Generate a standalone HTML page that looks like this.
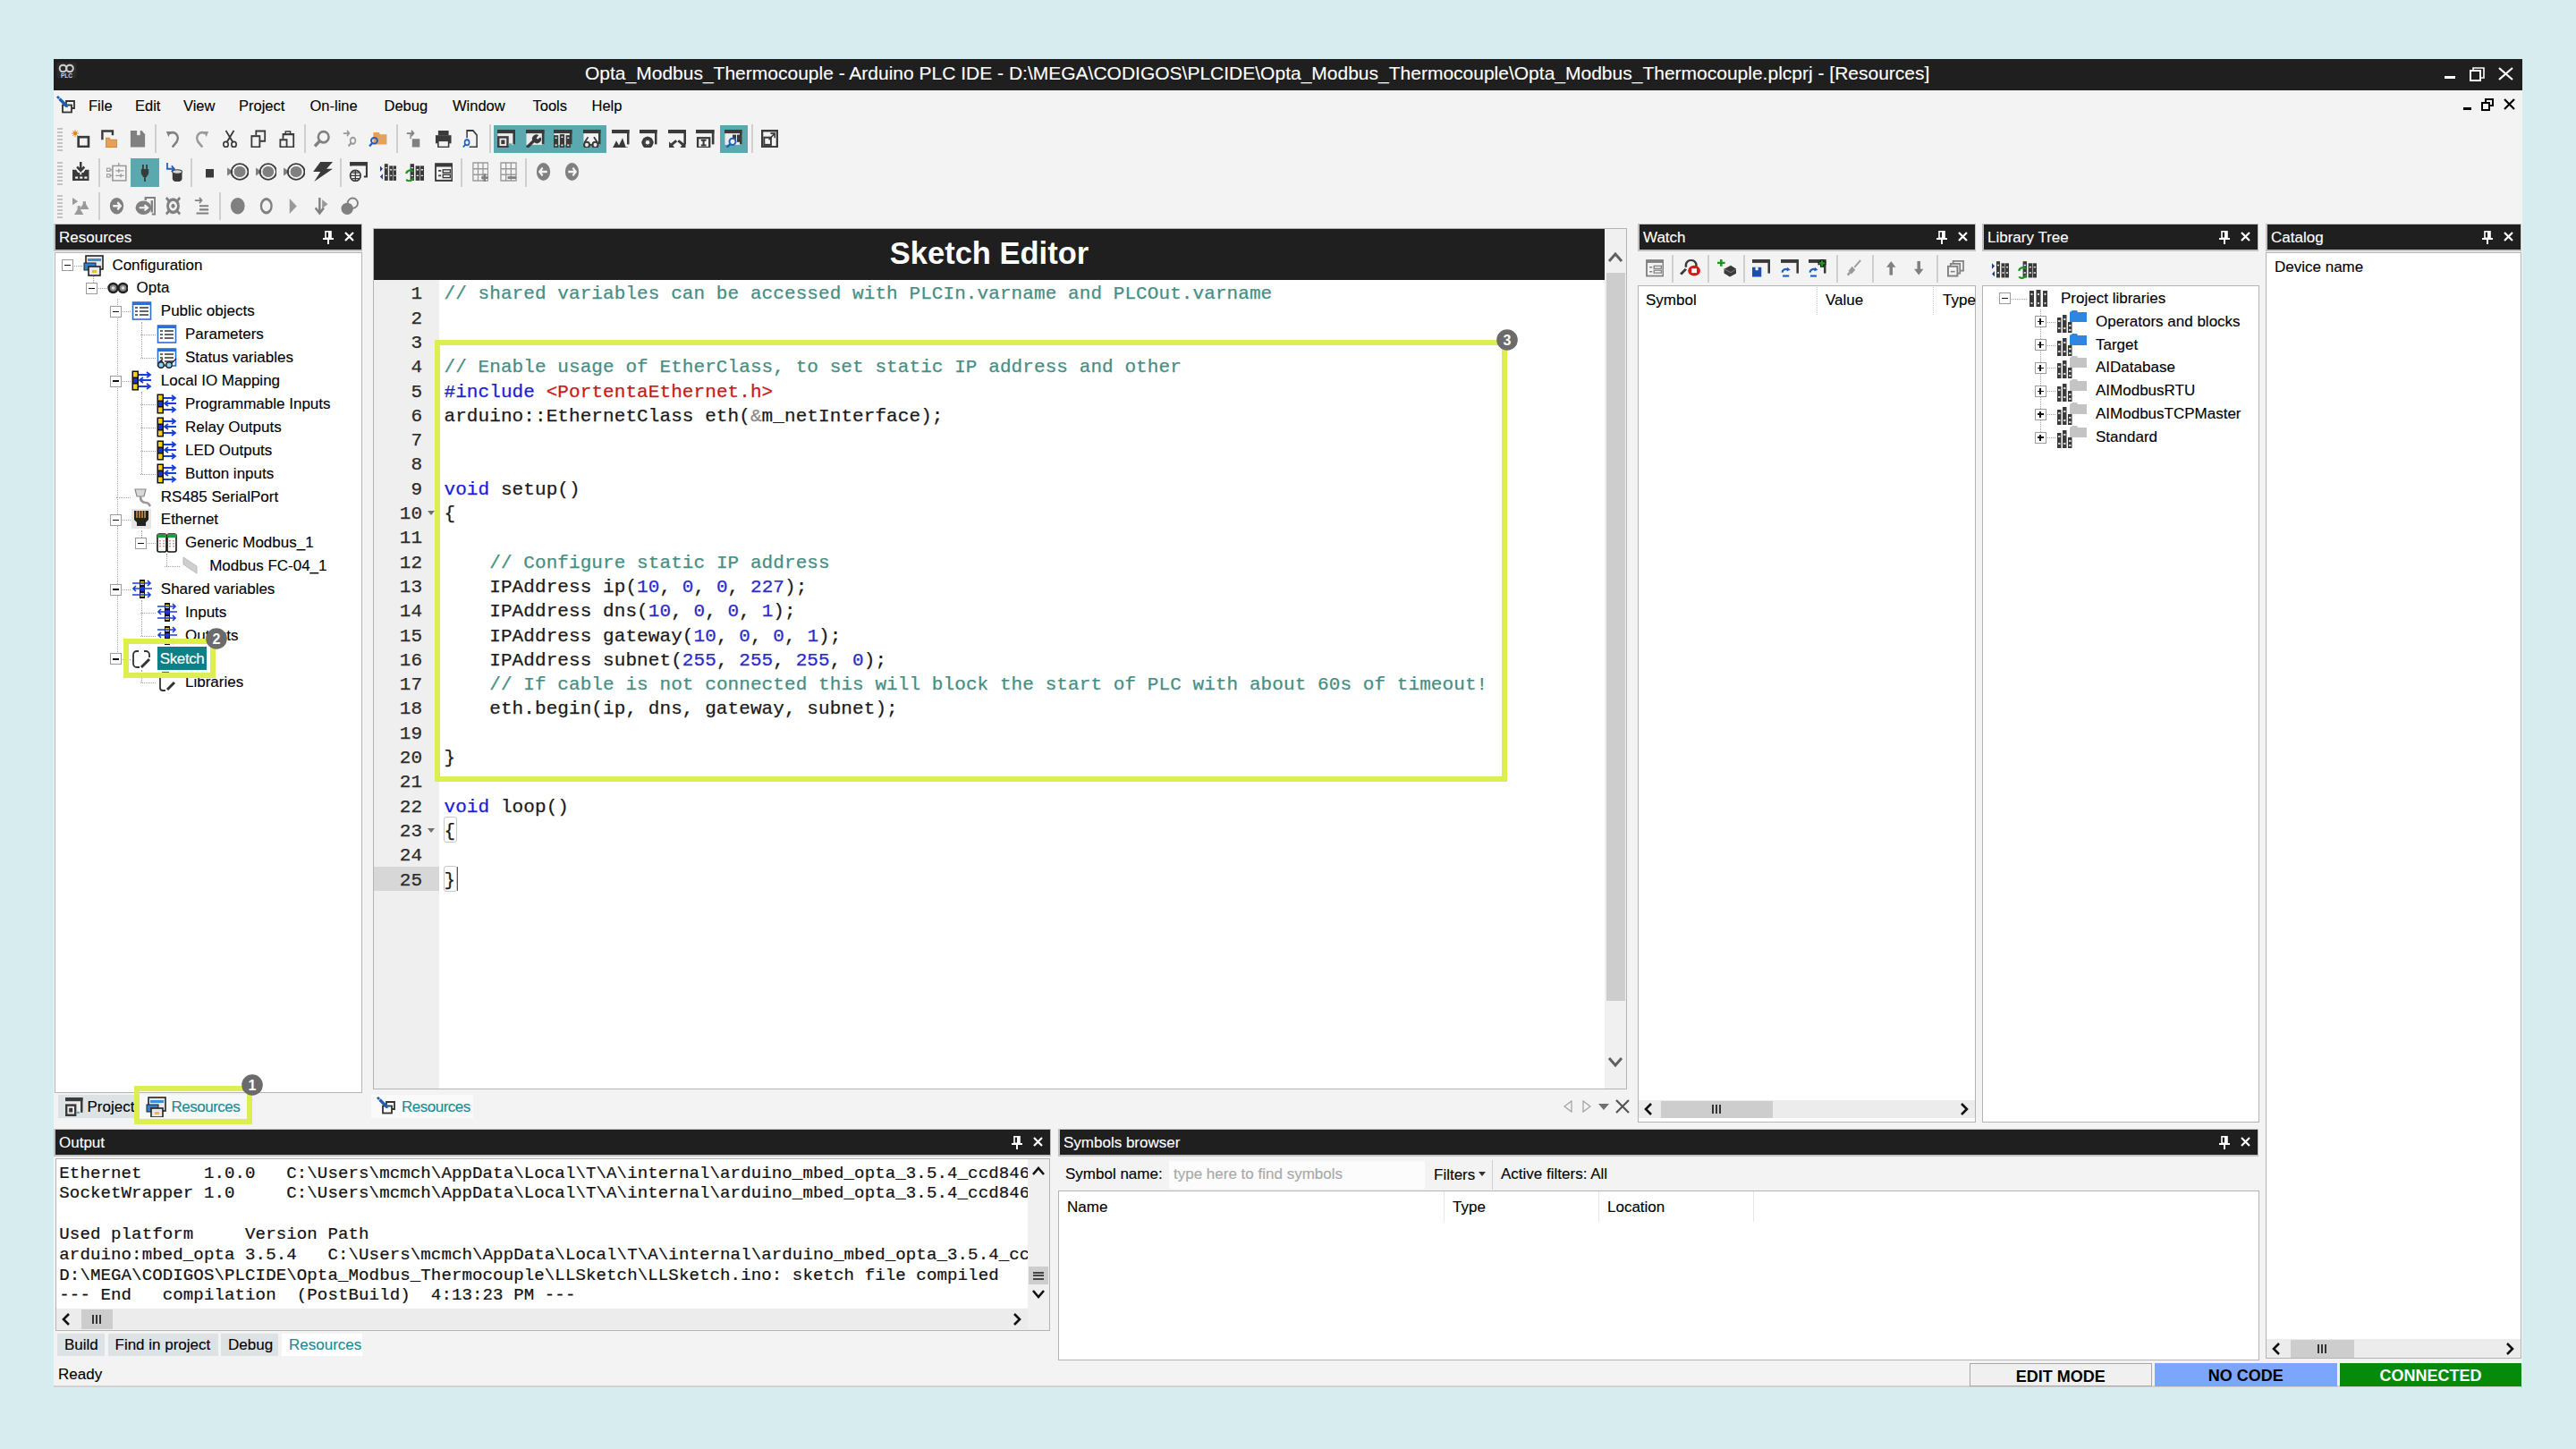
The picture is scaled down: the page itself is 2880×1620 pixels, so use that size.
<!DOCTYPE html><html><head><meta charset="utf-8"><style>
html,body{margin:0;padding:0;}
body{width:2880px;height:1620px;overflow:hidden;background:#d6ecef;position:relative;font-family:"Liberation Sans",sans-serif;}
body div, body svg{position:absolute;box-sizing:border-box;}
.t{-webkit-text-stroke:0.12px currentColor;}
</style></head><body>
<div style="left:60px;top:66px;width:2760px;height:1485px;background:#f3f3f3;"></div>
<div style="left:60px;top:66px;width:2760px;height:35px;background:#1f1f1f;"></div>
<div style="left:60px;top:1549px;width:2760px;height:2px;background:#d0d0d0;"></div>
<svg style="left:63px;top:69px;" width="23" height="19" viewBox="0 0 23 19"><rect x="0.5" y="0.5" width="22" height="18" rx="3" fill="#2b2b2b"/><circle cx="7.5" cy="7.5" r="3.8" fill="none" stroke="#d0d0d0" stroke-width="2"/><circle cx="15" cy="7.5" r="3.8" fill="none" stroke="#d0d0d0" stroke-width="2"/><text x="11.5" y="18" font-size="6.5" font-family="Liberation Sans" font-weight="bold" fill="#d0d0d0" text-anchor="middle">PLC</text></svg>
<div class="t" style="left:654px;top:69.5px;height:25px;line-height:25px;font:normal 21px 'Liberation Sans', sans-serif;color:#ffffff;white-space:pre;">Opta_Modbus_Thermocouple - Arduino PLC IDE - D:\MEGA\CODIGOS\PLCIDE\Opta_Modbus_Thermocouple\Opta_Modbus_Thermocouple.plcprj - [Resources]</div>
<div style="left:2733px;top:85px;width:12px;height:3px;background:#fff;"></div>
<svg style="left:2761px;top:75px;" width="17" height="16" viewBox="0 0 17 16"><rect x="1" y="4" width="11" height="11" fill="none" stroke="#fff" stroke-width="2"/><path d="M4 4V1h12v11h-4" fill="none" stroke="#fff" stroke-width="1.6"/></svg>
<svg style="left:2793px;top:75px;" width="17" height="15" viewBox="0 0 17 15"><path d="M1 1L16 14M16 1L1 14" stroke="#fff" stroke-width="2.2"/></svg>
<div style="left:2754px;top:120px;width:9px;height:3px;background:#000;"></div>
<svg style="left:2774px;top:110px;" width="14" height="14" viewBox="0 0 14 14"><rect x="1" y="5" width="8" height="8" fill="none" stroke="#000" stroke-width="2"/><path d="M5 5V1h8v7h-4" fill="none" stroke="#000" stroke-width="2"/></svg>
<svg style="left:2799px;top:110px;" width="13" height="13" viewBox="0 0 13 13"><path d="M1 1L12 12M12 1L1 12" stroke="#000" stroke-width="2.2"/></svg>
<svg style="left:63px;top:107px;" width="22" height="22" viewBox="0 0 22 22"><rect x="7" y="10.5" width="10" height="8" fill="none" stroke="#333" stroke-width="1.8"/><path d="M11 10V6h9v8h-3" fill="none" stroke="#333" stroke-width="1.8"/><path d="M3.5 3.5L12 12" stroke="#1a5fb4" stroke-width="3.2"/><path d="M0 1.5l2-1.5 2 2-2 2z" fill="#1a5fb4"/><path d="M11.5 11.5l2 1.5-2.5 0z" fill="#1a5fb4"/></svg>
<div class="t" style="left:99px;top:109.0px;height:20px;line-height:20px;font:normal 16.5px 'Liberation Sans', sans-serif;color:#000;white-space:pre;">File</div>
<div class="t" style="left:151px;top:109.0px;height:20px;line-height:20px;font:normal 16.5px 'Liberation Sans', sans-serif;color:#000;white-space:pre;">Edit</div>
<div class="t" style="left:205px;top:109.0px;height:20px;line-height:20px;font:normal 16.5px 'Liberation Sans', sans-serif;color:#000;white-space:pre;">View</div>
<div class="t" style="left:267px;top:109.0px;height:20px;line-height:20px;font:normal 16.5px 'Liberation Sans', sans-serif;color:#000;white-space:pre;">Project</div>
<div class="t" style="left:346.5px;top:109.0px;height:20px;line-height:20px;font:normal 16.5px 'Liberation Sans', sans-serif;color:#000;white-space:pre;">On-line</div>
<div class="t" style="left:429.5px;top:109.0px;height:20px;line-height:20px;font:normal 16.5px 'Liberation Sans', sans-serif;color:#000;white-space:pre;">Debug</div>
<div class="t" style="left:506px;top:109.0px;height:20px;line-height:20px;font:normal 16.5px 'Liberation Sans', sans-serif;color:#000;white-space:pre;">Window</div>
<div class="t" style="left:595.5px;top:109.0px;height:20px;line-height:20px;font:normal 16.5px 'Liberation Sans', sans-serif;color:#000;white-space:pre;">Tools</div>
<div class="t" style="left:661.5px;top:109.0px;height:20px;line-height:20px;font:normal 16.5px 'Liberation Sans', sans-serif;color:#000;white-space:pre;">Help</div>
<div style="left:64px;top:143px;width:6px;height:2px;background:#c4c4c4;"></div><div style="left:64px;top:147px;width:6px;height:2px;background:#c4c4c4;"></div><div style="left:64px;top:151px;width:6px;height:2px;background:#c4c4c4;"></div><div style="left:64px;top:155px;width:6px;height:2px;background:#c4c4c4;"></div><div style="left:64px;top:159px;width:6px;height:2px;background:#c4c4c4;"></div><div style="left:64px;top:163px;width:6px;height:2px;background:#c4c4c4;"></div><div style="left:64px;top:167px;width:6px;height:2px;background:#c4c4c4;"></div>
<div style="left:64px;top:181px;width:6px;height:2px;background:#c4c4c4;"></div><div style="left:64px;top:185px;width:6px;height:2px;background:#c4c4c4;"></div><div style="left:64px;top:189px;width:6px;height:2px;background:#c4c4c4;"></div><div style="left:64px;top:193px;width:6px;height:2px;background:#c4c4c4;"></div><div style="left:64px;top:197px;width:6px;height:2px;background:#c4c4c4;"></div><div style="left:64px;top:201px;width:6px;height:2px;background:#c4c4c4;"></div><div style="left:64px;top:205px;width:6px;height:2px;background:#c4c4c4;"></div>
<div style="left:64px;top:218px;width:6px;height:2px;background:#c4c4c4;"></div><div style="left:64px;top:222px;width:6px;height:2px;background:#c4c4c4;"></div><div style="left:64px;top:226px;width:6px;height:2px;background:#c4c4c4;"></div><div style="left:64px;top:230px;width:6px;height:2px;background:#c4c4c4;"></div><div style="left:64px;top:234px;width:6px;height:2px;background:#c4c4c4;"></div><div style="left:64px;top:238px;width:6px;height:2px;background:#c4c4c4;"></div><div style="left:64px;top:242px;width:6px;height:2px;background:#c4c4c4;"></div>
<div style="left:551.5px;top:139.5px;width:126.5px;height:31.5px;background:#5aa9ae;"></div>
<div style="left:804.5px;top:139.5px;width:31.5px;height:31.5px;background:#5aa9ae;"></div>
<div style="left:146px;top:177px;width:32px;height:31.5px;background:#5aa9ae;"></div>
<svg style="left:80px;top:144.5px" width="20.5" height="20.5" viewBox="0 0 20 20" preserveAspectRatio="none"><circle cx="4" cy="4" r="2" fill="#e0871a"/><path d="M4 0v8M0 4h8M1.2 1.2l5.6 5.6M6.8 1.2L1.2 6.8" stroke="#e0871a" stroke-width="0.9"/><rect x="7.5" y="8" width="11" height="10.5" fill="none" stroke="#3a3a3a" stroke-width="2.6"/></svg>
<svg style="left:112.5px;top:144.5px" width="18.5" height="20.5" viewBox="0 0 20 20" preserveAspectRatio="none"><path d="M1.5 11V1.5H14V6" fill="none" stroke="#3a3a3a" stroke-width="2.6"/><path d="M6 19V9h4l1 2h8v8z" fill="#e3a15c" stroke="#c98a40" stroke-width="1"/></svg>
<svg style="left:144.5px;top:144.5px" width="18.0" height="20.5" viewBox="0 0 20 20" preserveAspectRatio="none"><path d="M1 1h14l4 4v14H1z" fill="#808080"/><rect x="9" y="1" width="4" height="5" fill="#f3f3f3"/></svg>
<div style="left:173.0px;top:139px;width:2.0px;height:32px;background:#cfcfcf;"></div>
<svg style="left:185px;top:144.5px" width="17" height="20.5" viewBox="0 0 20 20" preserveAspectRatio="none"><path d="M5 4C12 1 19 6 15 13L9 19" fill="none" stroke="#808080" stroke-width="2.8"/><path d="M1 2l6 0-3 6z" fill="#808080"/></svg>
<svg style="left:217px;top:144.5px" width="17" height="20.5" viewBox="0 0 20 20" preserveAspectRatio="none"><path d="M15 4C8 1 1 6 5 13L11 19" fill="none" stroke="#9a9a9a" stroke-width="2.8"/><path d="M19 2h-6l3 6z" fill="#9a9a9a"/></svg>
<svg style="left:248px;top:144.5px" width="18" height="20.5" viewBox="0 0 20 20" preserveAspectRatio="none"><path d="M5 1l9 13M15 1L6 14" stroke="#3a3a3a" stroke-width="2"/><circle cx="5" cy="16" r="3" fill="none" stroke="#3a3a3a" stroke-width="1.8"/><circle cx="15" cy="16" r="3" fill="none" stroke="#3a3a3a" stroke-width="1.8"/></svg>
<svg style="left:280px;top:144.5px" width="18" height="20.5" viewBox="0 0 20 20" preserveAspectRatio="none"><rect x="1.5" y="7" width="10" height="12" fill="none" stroke="#3a3a3a" stroke-width="2"/><path d="M7 6V1.5h11v11h-6" fill="none" stroke="#3a3a3a" stroke-width="2"/></svg>
<svg style="left:311.5px;top:144.5px" width="18.0" height="20.5" viewBox="0 0 20 20" preserveAspectRatio="none"><rect x="1.5" y="11" width="8" height="8" fill="none" stroke="#3a3a3a" stroke-width="2"/><path d="M5 10V5h13v14h-8" fill="none" stroke="#3a3a3a" stroke-width="2"/><path d="M8 5V2h6v3" fill="none" stroke="#3a3a3a" stroke-width="1.6"/></svg>
<div style="left:339.5px;top:139px;width:2.0px;height:32px;background:#cfcfcf;"></div>
<svg style="left:349.5px;top:144.5px" width="19.5" height="20.5" viewBox="0 0 20 20" preserveAspectRatio="none"><circle cx="12" cy="8" r="6" fill="none" stroke="#808080" stroke-width="2.6"/><path d="M8 12L2 18" stroke="#808080" stroke-width="3.4"/></svg>
<svg style="left:383px;top:144.5px" width="16.5" height="20.5" viewBox="0 0 20 20" preserveAspectRatio="none"><path d="M1 4h8M6 1l3 3-3 3" fill="none" stroke="#9a9a9a" stroke-width="1.8"/><circle cx="14" cy="12" r="3.5" fill="none" stroke="#9a9a9a" stroke-width="2"/><path d="M11.5 14.5L8 18" stroke="#9a9a9a" stroke-width="2.4"/></svg>
<svg style="left:411.5px;top:144.5px" width="21.5" height="20.5" viewBox="0 0 20 20" preserveAspectRatio="none"><path d="M5 16V3h6l1 2h7v11z" fill="#e3a15c"/><circle cx="6" cy="12" r="3.2" fill="none" stroke="#1f5fbf" stroke-width="1.8"/><path d="M4 14.5L1 18" stroke="#1f5fbf" stroke-width="2.2"/></svg>
<div style="left:443.0px;top:139px;width:2.0px;height:32px;background:#cfcfcf;"></div>
<svg style="left:454px;top:144.5px" width="17" height="20.5" viewBox="0 0 20 20" preserveAspectRatio="none"><path d="M1 4h9M7 1l3 3-3 3" fill="none" stroke="#808080" stroke-width="1.8"/><path d="M6 4v6" stroke="#808080" stroke-width="1.5"/><rect x="8" y="10" width="10" height="9" fill="#808080"/></svg>
<svg style="left:485.5px;top:144.5px" width="19.5" height="20.5" viewBox="0 0 20 20" preserveAspectRatio="none"><rect x="4" y="1" width="12" height="5" fill="#3a3a3a"/><rect x="1" y="6" width="18" height="9" fill="#3a3a3a"/><rect x="4" y="12" width="12" height="7" fill="#f3f3f3" stroke="#3a3a3a" stroke-width="1.6"/></svg>
<svg style="left:517px;top:144.5px" width="17" height="20.5" viewBox="0 0 20 20" preserveAspectRatio="none"><path d="M6 9V1h8l5 5v13H9" fill="none" stroke="#3a3a3a" stroke-width="1.8"/><circle cx="6" cy="14" r="3" fill="none" stroke="#1f5fbf" stroke-width="1.8"/><path d="M4 16L1 19" stroke="#1f5fbf" stroke-width="2"/></svg>
<div style="left:546.5px;top:139px;width:2.0px;height:32px;background:#cfcfcf;"></div>
<svg style="left:555.5px;top:144.5px" width="20.5" height="20.5" viewBox="0 0 20 20" preserveAspectRatio="none"><rect x="0.5" y="1" width="18" height="15.5" fill="#ececec"/><rect x="0" y="0" width="19.5" height="4" fill="#3a3a3a"/><rect x="17" y="0" width="2.5" height="16" fill="#3a3a3a"/><rect x="1.2" y="8.2" width="10" height="10.6" fill="#ececec" stroke="#3a3a3a" stroke-width="2.4"/><rect x="4.2" y="11.2" width="4" height="4.5" fill="#3a3a3a"/><path d="M12 16h4" stroke="#5aa9ae" stroke-width="2"/></svg>
<svg style="left:588px;top:144.5px" width="21" height="20.5" viewBox="0 0 20 20" preserveAspectRatio="none"><rect x="0.5" y="1" width="18" height="15.5" fill="#ececec"/><rect x="0" y="0" width="19.5" height="4" fill="#3a3a3a"/><rect x="17" y="0" width="2.5" height="16" fill="#3a3a3a"/><path d="M1 19.5L9.5 11" stroke="#3a3a3a" stroke-width="3.2"/><path d="M7.5 12.5a4.5 4.5 0 0 1 6-6.5l-2.5 3 1.5 1.5 3-2.5a4.5 4.5 0 0 1-6.5 6z" fill="#3a3a3a"/></svg>
<svg style="left:619px;top:144.5px" width="21" height="20.5" viewBox="0 0 20 20" preserveAspectRatio="none"><rect x="0.5" y="1" width="18" height="15.5" fill="#ececec"/><rect x="0" y="0" width="19.5" height="4" fill="#3a3a3a"/><rect x="17" y="0" width="2.5" height="16" fill="#3a3a3a"/><rect x="0" y="6" width="5" height="14" fill="#3a3a3a"/><rect x="6.5" y="5" width="5" height="15" fill="#3a3a3a"/><rect x="13" y="6" width="5" height="14" fill="#3a3a3a"/><path d="M1.5 9h2M1.5 17h2M8 8h2M8 17h2M14.5 9h2M14.5 17h2" stroke="#ececec" stroke-width="1.6"/></svg>
<svg style="left:652px;top:144.5px" width="20" height="20.5" viewBox="0 0 20 20" preserveAspectRatio="none"><rect x="0.5" y="1" width="18" height="15.5" fill="#f3f3f3"/><rect x="0" y="0" width="19.5" height="4" fill="#3a3a3a"/><rect x="17" y="0" width="2.5" height="16" fill="#3a3a3a"/><circle cx="4" cy="16.5" r="3" fill="#ececec" stroke="#3a3a3a" stroke-width="2"/><circle cx="13.5" cy="16.5" r="3" fill="#ececec" stroke="#3a3a3a" stroke-width="2"/><path d="M7 16.5h3.5M1.5 14l4-6M16 14l-4-6" stroke="#3a3a3a" stroke-width="1.8"/></svg>
<svg style="left:684px;top:144.5px" width="20" height="20.5" viewBox="0 0 20 20" preserveAspectRatio="none"><rect x="0.5" y="1" width="18" height="15.5" fill="#f3f3f3"/><rect x="0" y="0" width="19.5" height="4" fill="#3a3a3a"/><rect x="17" y="0" width="2.5" height="16" fill="#3a3a3a"/><path d="M1 20L5 12l3 5 4-8 4 11z" fill="#3a3a3a"/><path d="M1 20h17" stroke="#3a3a3a" stroke-width="2"/></svg>
<svg style="left:715px;top:144.5px" width="20" height="20.5" viewBox="0 0 20 20" preserveAspectRatio="none"><rect x="0.5" y="1" width="18" height="15.5" fill="#f3f3f3"/><rect x="0" y="0" width="19.5" height="4" fill="#3a3a3a"/><rect x="17" y="0" width="2.5" height="16" fill="#3a3a3a"/><circle cx="9" cy="14" r="5" fill="none" stroke="#3a3a3a" stroke-width="3"/><path d="M9 7.5v13M2.5 14h13M4.5 9.5l9 9M13.5 9.5l-9 9" stroke="#3a3a3a" stroke-width="2"/><circle cx="9" cy="14" r="2.2" fill="#f3f3f3"/></svg>
<svg style="left:746.5px;top:144.5px" width="20.5" height="20.5" viewBox="0 0 20 20" preserveAspectRatio="none"><rect x="0.5" y="1" width="18" height="15.5" fill="#f3f3f3"/><rect x="0" y="0" width="19.5" height="4" fill="#3a3a3a"/><rect x="17" y="0" width="2.5" height="16" fill="#3a3a3a"/><path d="M1 19.5V13l2 2 5-4 2 2-5 4 2 2.5z" fill="#3a3a3a"/><path d="M19 19.5V13l-2 2-5-4-2 2 5 4-2 2.5z" fill="#3a3a3a"/></svg>
<svg style="left:778px;top:144.5px" width="21" height="20.5" viewBox="0 0 20 20" preserveAspectRatio="none"><rect x="0.5" y="1" width="18" height="15.5" fill="#f3f3f3"/><rect x="0" y="0" width="19.5" height="4" fill="#3a3a3a"/><rect x="17" y="0" width="2.5" height="16" fill="#3a3a3a"/><rect x="2" y="9" width="12.5" height="10.5" fill="#f3f3f3" stroke="#3a3a3a" stroke-width="2.2"/><path d="M5.5 11.5h5.5M8.2 11.5v5.5M5.5 17h5.5" stroke="#3a3a3a" stroke-width="2"/></svg>
<svg style="left:810px;top:144.5px" width="20" height="20.5" viewBox="0 0 20 20" preserveAspectRatio="none"><rect x="0.5" y="1" width="18" height="15.5" fill="#ececec"/><rect x="0" y="0" width="19.5" height="4" fill="#3a3a3a"/><rect x="17" y="0" width="2.5" height="16" fill="#3a3a3a"/><rect x="9" y="5.5" width="4" height="5" fill="#3a3a3a"/><rect x="14" y="5.5" width="3" height="8" fill="#3a3a3a"/><circle cx="9" cy="13" r="3.5" fill="#ececec" stroke="#1f5fbf" stroke-width="2"/><path d="M6.5 15.5L2.5 19.5" stroke="#1f5fbf" stroke-width="2.4"/></svg>
<div style="left:839.5px;top:139px;width:2.0px;height:32px;background:#cfcfcf;"></div>
<svg style="left:851px;top:144.5px" width="19" height="20.5" viewBox="0 0 20 20" preserveAspectRatio="none"><rect x="1.2" y="1.2" width="17.6" height="17.6" fill="none" stroke="#3a3a3a" stroke-width="2.4"/><rect x="3.5" y="8.5" width="8" height="8" fill="none" stroke="#3a3a3a" stroke-width="2"/><path d="M9 11l6-6M11 4h5v5" fill="none" stroke="#3a3a3a" stroke-width="1.6"/></svg>
<svg style="left:80px;top:181px" width="20.5" height="22" viewBox="0 0 20 20" preserveAspectRatio="none"><path d="M10 0v9M6 5l4 4 4-4" fill="none" stroke="#3a3a3a" stroke-width="2.4"/><path d="M1 8h4l2 3h6l2-3h4v11H1z" fill="#3a3a3a"/><rect x="4" y="15" width="3" height="2" fill="#f3f3f3"/><rect x="9" y="15" width="3" height="2" fill="#f3f3f3"/><rect x="14" y="15" width="3" height="2" fill="#f3f3f3"/><rect x="9" y="11" width="2" height="2" fill="#f3f3f3"/></svg>
<div style="left:109.5px;top:177px;width:2.0px;height:32px;background:#cfcfcf;"></div>
<svg style="left:119px;top:181px" width="23" height="22" viewBox="0 0 20 20" preserveAspectRatio="none"><rect x="6" y="4" width="13" height="15" fill="none" stroke="#9a9a9a" stroke-width="1.4"/><path d="M1 8h5M1 14h5M12 1v3" stroke="#9a9a9a" stroke-width="1.2"/><rect x="0.5" y="6.5" width="3" height="3" fill="#f3f3f3" stroke="#9a9a9a"/><rect x="0.5" y="12.5" width="3" height="3" fill="#f3f3f3" stroke="#9a9a9a"/><path d="M9 9h8M9 14h8M12 7v4M14 12v4" stroke="#9a9a9a" stroke-width="1.2"/></svg>
<svg style="left:156px;top:183px" width="12" height="20" viewBox="0 0 20 20" preserveAspectRatio="none"><rect x="5" y="1" width="3" height="6" fill="#3a3a3a"/><rect x="12" y="1" width="3" height="6" fill="#3a3a3a"/><path d="M3 6h14v5l-4 4H7l-4-4z" fill="#3a3a3a"/><rect x="8.5" y="14" width="3" height="6" fill="#3a3a3a"/></svg>
<svg style="left:185px;top:181px" width="19.5" height="22" viewBox="0 0 20 20" preserveAspectRatio="none"><path d="M2 1v6h8M7 4l3 3-3 3" fill="none" stroke="#1f5fbf" stroke-width="1.8"/><path d="M8 10h11v7a5 3 0 0 1-11 0z" fill="#3a3a3a"/><ellipse cx="13.5" cy="10" rx="5.5" ry="2" fill="#d8d8d8" stroke="#3a3a3a"/></svg>
<div style="left:213.0px;top:177px;width:2.0px;height:32px;background:#cfcfcf;"></div>
<svg style="left:229.5px;top:189px" width="9.0" height="9.5" viewBox="0 0 20 20" preserveAspectRatio="none"><rect x="0" y="0" width="20" height="20" fill="#3a3a3a"/></svg>
<svg style="left:254px;top:181px" width="23.5" height="22" viewBox="0 0 20 20" preserveAspectRatio="none"><path d="M0 6l6 4-6 4z" fill="#808080"/><circle cx="12" cy="10" r="8" fill="none" stroke="#3a3a3a" stroke-width="1.6"/><circle cx="12" cy="10" r="6" fill="#808080" stroke="#fff" stroke-width="0.8"/></svg>
<svg style="left:286px;top:181px" width="23" height="22" viewBox="0 0 20 20" preserveAspectRatio="none"><path d="M0 6l6 4-6 4z" fill="#808080"/><circle cx="12" cy="10" r="8" fill="none" stroke="#3a3a3a" stroke-width="1.6"/><circle cx="12" cy="10" r="6" fill="#808080" stroke="#fff" stroke-width="0.8"/></svg>
<svg style="left:317px;top:181px" width="23.5" height="22" viewBox="0 0 20 20" preserveAspectRatio="none"><path d="M0 6l6 4-6 4z" fill="#808080"/><circle cx="12" cy="10" r="8" fill="none" stroke="#3a3a3a" stroke-width="1.6"/><circle cx="12" cy="10" r="6" fill="#808080" stroke="#fff" stroke-width="0.8"/></svg>
<svg style="left:349px;top:181px" width="23" height="22" viewBox="0 0 20 20" preserveAspectRatio="none"><path d="M8 0h12l-6 7h6L2 20l6-10H1z" fill="#3a3a3a"/></svg>
<div style="left:379.5px;top:177px;width:2.0px;height:32px;background:#cfcfcf;"></div>
<svg style="left:390px;top:181px" width="21" height="22" viewBox="0 0 20 20" preserveAspectRatio="none"><path d="M2 4V1h17v14h-3" fill="none" stroke="#3a3a3a" stroke-width="2"/><rect x="2" y="1" width="17" height="3" fill="#3a3a3a"/><circle cx="7" cy="14" r="5.5" fill="#f3f3f3" stroke="#3a3a3a" stroke-width="1.6"/><path d="M2 14h10M7 9v10M3.5 11h7M3.5 17h7" stroke="#3a3a3a" stroke-width="1.2"/></svg>
<svg style="left:423.5px;top:181px" width="19.5" height="22" viewBox="0 0 20 20" preserveAspectRatio="none"><rect x="6" y="2" width="4" height="17" fill="#3a3a3a"/><rect x="11.5" y="4" width="4" height="15" fill="#3a3a3a"/><rect x="16" y="4" width="4" height="15" fill="#3a3a3a"/><path d="M7 6h2M7 14h2M12.5 8h2M12.5 14h2M17 8h2M17 14h2" stroke="#f3f3f3" stroke-width="1.3"/><path d="M1 4l3 3-3 3zM4 12l-3 3 3 3z" fill="#1b3a8f"/></svg>
<svg style="left:452px;top:181px" width="22" height="22" viewBox="0 0 20 20" preserveAspectRatio="none"><rect x="6" y="2" width="4" height="17" fill="#3a3a3a"/><rect x="11.5" y="4" width="4" height="15" fill="#3a3a3a"/><rect x="16" y="4" width="4" height="15" fill="#3a3a3a"/><path d="M7 6h2M7 14h2M12.5 8h2M12.5 14h2M17 8h2M17 14h2" stroke="#f3f3f3" stroke-width="1.3"/><path d="M2 12a4 4 0 0 1 7-2M9 16a4 4 0 0 1-7 2" fill="none" stroke="#1a9a1a" stroke-width="2"/></svg>
<svg style="left:485.5px;top:181px" width="20.5" height="22" viewBox="0 0 20 20" preserveAspectRatio="none"><rect x="1" y="2" width="18" height="17" fill="none" stroke="#3a3a3a" stroke-width="1.8"/><rect x="1" y="2" width="18" height="3" fill="#3a3a3a"/><path d="M4 9h3M4 14h3" stroke="#3a3a3a" stroke-width="1.5"/><rect x="9" y="8" width="8" height="3" fill="none" stroke="#3a3a3a" stroke-width="1.3"/><rect x="9" y="13" width="8" height="3" fill="none" stroke="#3a3a3a" stroke-width="1.3"/></svg>
<div style="left:515.0px;top:177px;width:2.0px;height:32px;background:#cfcfcf;"></div>
<svg style="left:527.5px;top:181px" width="18.5" height="22" viewBox="0 0 20 20" preserveAspectRatio="none"><path d="M1 1h18v18H1zM1 7h18M1 13h18M7 1v18M13 1v18" fill="none" stroke="#9a9a9a" stroke-width="1.4"/><path d="M15 12v8M11 16h8" stroke="#808080" stroke-width="2.4"/></svg>
<svg style="left:559px;top:181px" width="19" height="22" viewBox="0 0 20 20" preserveAspectRatio="none"><path d="M1 1h18v18H1zM1 7h18M1 13h18M7 1v18M13 1v18" fill="none" stroke="#9a9a9a" stroke-width="1.4"/><path d="M9 16h10" stroke="#808080" stroke-width="2.6"/></svg>
<div style="left:587.0px;top:177px;width:2.0px;height:32px;background:#cfcfcf;"></div>
<svg style="left:599px;top:181px" width="17" height="22" viewBox="0 0 20 20" preserveAspectRatio="none"><circle cx="10" cy="10" r="9" fill="#808080"/><path d="M15 10H6M9 6l-4 4 4 4" fill="none" stroke="#f3f3f3" stroke-width="2.4"/></svg>
<svg style="left:631px;top:181px" width="17" height="22" viewBox="0 0 20 20" preserveAspectRatio="none"><circle cx="10" cy="10" r="9" fill="#808080"/><path d="M5 10h9M11 6l4 4-4 4" fill="none" stroke="#f3f3f3" stroke-width="2.4"/></svg>
<svg style="left:80px;top:220px" width="20.5" height="20.5" viewBox="0 0 20 20" preserveAspectRatio="none"><path d="M1 1l6 4-6 4z" fill="#9a9a9a"/><path d="M7 10v4l-3 5h8l-3-5v-4M13 5v3l-3 5h8l-3-5V5" fill="#9a9a9a" stroke="#9a9a9a" stroke-width="1.2"/></svg>
<div style="left:109.5px;top:214.5px;width:2.0px;height:31.0px;background:#cfcfcf;"></div>
<svg style="left:122px;top:220px" width="17" height="20.5" viewBox="0 0 20 20" preserveAspectRatio="none"><circle cx="10" cy="10" r="9" fill="#808080"/><path d="M5 10h9M11 6l4 4-4 4" fill="none" stroke="#f3f3f3" stroke-width="2.6"/></svg>
<svg style="left:150.5px;top:220px" width="23.5" height="20.5" viewBox="0 0 20 20" preserveAspectRatio="none"><circle cx="8" cy="12" r="7.5" fill="#808080"/><path d="M4 12h7M9 9l3 3-3 3" fill="none" stroke="#f3f3f3" stroke-width="2"/><path d="M10 4V1h9v18h-3" fill="none" stroke="#808080" stroke-width="2"/><rect x="15" y="4" width="2" height="13" fill="#808080"/></svg>
<svg style="left:185px;top:220px" width="17" height="20.5" viewBox="0 0 20 20" preserveAspectRatio="none"><circle cx="10" cy="10" r="7" fill="none" stroke="#808080" stroke-width="3.4"/><path d="M1 1l5 5M19 1l-5 5M1 19l5-5M19 19l-5-5" stroke="#808080" stroke-width="3"/><circle cx="10" cy="10" r="2.5" fill="#808080"/></svg>
<svg style="left:217px;top:220px" width="17" height="20.5" viewBox="0 0 20 20" preserveAspectRatio="none"><path d="M1 4h9M7 1l3 3-3 3" fill="none" stroke="#808080" stroke-width="1.8"/><path d="M7 10h12M7 14h12M3 18h16" stroke="#808080" stroke-width="2"/></svg>
<div style="left:245.0px;top:214.5px;width:2.0px;height:31.0px;background:#cfcfcf;"></div>
<svg style="left:257px;top:220px" width="17.5" height="20.5" viewBox="0 0 20 20" preserveAspectRatio="none"><circle cx="10" cy="10" r="9" fill="#808080"/></svg>
<svg style="left:289.5px;top:220px" width="15.5" height="20.5" viewBox="0 0 20 20" preserveAspectRatio="none"><circle cx="10" cy="10" r="7.5" fill="none" stroke="#808080" stroke-width="3"/></svg>
<svg style="left:322px;top:221px" width="11.5" height="19" viewBox="0 0 20 20" preserveAspectRatio="none"><path d="M3 1l14 9-14 9z" fill="#9a9a9a"/></svg>
<svg style="left:348.5px;top:220px" width="18.5" height="20.5" viewBox="0 0 20 20" preserveAspectRatio="none"><path d="M9 1v15M4 12l5 6 5-6" fill="none" stroke="#808080" stroke-width="2.6"/><path d="M12 3l7 5-7 5z" fill="#9a9a9a"/></svg>
<svg style="left:380.5px;top:220px" width="20.5" height="20.5" viewBox="0 0 20 20" preserveAspectRatio="none"><circle cx="7" cy="13" r="6.5" fill="#808080"/><circle cx="13" cy="7" r="5.5" fill="none" stroke="#808080" stroke-width="1.8"/></svg>
<div style="left:60px;top:250px;width:345px;height:31px;background:#f3f3f3;border:2px solid #c2c2c2;"></div><div style="left:62px;top:251px;width:342px;height:28px;background:#1f1f1f;"></div><div class="t" style="left:66px;top:255.5px;height:20px;line-height:20px;font:normal 17px 'Liberation Sans', sans-serif;color:#ffffff;white-space:pre;">Resources</div><svg style="left:361px;top:258.0px;" width="12" height="15" viewBox="0 0 12 15"><rect x="3" y="0.8" width="6" height="7.5" fill="none" stroke="#fff" stroke-width="1.6"/><rect x="6" y="0" width="3" height="8" fill="#fff"/><path d="M0 9h12M6 9v6" stroke="#fff" stroke-width="2"/></svg><svg style="left:385px;top:259.0px;" width="11" height="11" viewBox="0 0 11 11"><path d="M1 1L10 10M10 1L1 10" stroke="#fff" stroke-width="2.2"/></svg>
<div style="left:61px;top:282px;width:344px;height:940px;background:#ffffff;border:1px solid #b4b4b4;"></div>
<div style="left:104.0px;top:308.5px;width:1.0px;height:13.899999999999977px;border-left:1px dotted #a0a0a0;"></div>
<div style="left:131.2px;top:334.4px;width:1.0px;height:402.4px;border-left:1px dotted #a0a0a0;"></div>
<div style="left:158.4px;top:360.3px;width:1.0px;height:39.80000000000001px;border-left:1px dotted #a0a0a0;"></div>
<div style="left:158.4px;top:438.0px;width:1.0px;height:91.60000000000002px;border-left:1px dotted #a0a0a0;"></div>
<div style="left:158.4px;top:593.4px;width:1.0px;height:13.899999999999977px;border-left:1px dotted #a0a0a0;"></div>
<div style="left:185.6px;top:619.3px;width:1.0px;height:13.900000000000091px;border-left:1px dotted #a0a0a0;"></div>
<div style="left:158.4px;top:671.0999999999999px;width:1.0px;height:39.80000000000007px;border-left:1px dotted #a0a0a0;"></div>
<div style="left:158.4px;top:748.8px;width:1.0px;height:13.900000000000091px;border-left:1px dotted #a0a0a0;"></div>
<div style="left:75.5px;top:296.5px;width:16.5px;height:1.0px;border-top:1px dotted #a0a0a0;"></div>
<div style="left:69.0px;top:290.0px;width:13.0px;height:13.0px;background:#fff;border:1px solid #9c9c9c;"></div><div style="left:72.0px;top:295.75px;width:7.0px;height:1.5px;background:#111;"></div>
<svg style="left:93.0px;top:284.5px;" width="23" height="24" viewBox="0 0 23 24"><rect x="3" y="1" width="19" height="15" fill="#e8e8e8" stroke="#222" stroke-width="1.6"/><rect x="5" y="4" width="15" height="3" fill="#3a8fd8"/><rect x="1" y="9" width="13" height="8" fill="#2e7fd0" stroke="#222" stroke-width="1"/><rect x="6" y="13" width="13" height="10" fill="#e8e8e8" stroke="#222" stroke-width="1.6"/><rect x="10" y="17" width="5" height="3" fill="#e5c12a"/></svg>
<div class="t" style="left:125.4px;top:286.5px;height:20px;line-height:20px;font:normal 17px 'Liberation Sans', sans-serif;color:#000000;white-space:pre;">Configuration</div>
<div style="left:102.7px;top:322.4px;width:16.5px;height:1.0px;border-top:1px dotted #a0a0a0;"></div>
<div style="left:96.2px;top:315.9px;width:13.0px;height:13.0px;background:#fff;border:1px solid #9c9c9c;"></div><div style="left:99.2px;top:321.65px;width:7.0px;height:1.5px;background:#111;"></div>
<svg style="left:120.2px;top:310.4px;" width="23" height="24" viewBox="0 0 23 24"><circle cx="6.5" cy="12" r="5" fill="#888" stroke="#222" stroke-width="2.4"/><circle cx="17.5" cy="12" r="5" fill="#888" stroke="#222" stroke-width="2.4"/><circle cx="6.5" cy="12" r="1.8" fill="#ddd"/><circle cx="17.5" cy="12" r="1.8" fill="#ddd"/></svg>
<div class="t" style="left:152.6px;top:312.4px;height:20px;line-height:20px;font:normal 17px 'Liberation Sans', sans-serif;color:#000000;white-space:pre;">Opta</div>
<div style="left:129.9px;top:348.3px;width:16.5px;height:1.0px;border-top:1px dotted #a0a0a0;"></div>
<div style="left:123.4px;top:341.8px;width:13.0px;height:13.0px;background:#fff;border:1px solid #9c9c9c;"></div><div style="left:126.4px;top:347.55px;width:7.0px;height:1.5px;background:#111;"></div>
<svg style="left:147.4px;top:336.3px;" width="23" height="24" viewBox="0 0 23 24"><rect x="1.5" y="2" width="20" height="19" fill="#fff" stroke="#2e6fd0" stroke-width="1.6"/><rect x="1.5" y="2" width="20" height="3" fill="#2e6fd0"/><path d="M4 8h3M9 8h10M4 12h3M9 12h10M4 16h3M9 16h10" stroke="#333" stroke-width="1.4"/></svg>
<div class="t" style="left:179.8px;top:338.3px;height:20px;line-height:20px;font:normal 17px 'Liberation Sans', sans-serif;color:#000000;white-space:pre;">Public objects</div>
<div style="left:157.1px;top:374.2px;width:16.5px;height:1.0px;border-top:1px dotted #a0a0a0;"></div>
<svg style="left:174.6px;top:362.2px;" width="23" height="24" viewBox="0 0 23 24"><rect x="1.5" y="2" width="20" height="19" fill="#fff" stroke="#2e6fd0" stroke-width="1.6"/><rect x="1.5" y="2" width="20" height="3" fill="#2e6fd0"/><path d="M4 8h3M9 8h10M4 12h3M9 12h10M4 16h3M9 16h10" stroke="#333" stroke-width="1.4"/></svg>
<div class="t" style="left:207.0px;top:364.2px;height:20px;line-height:20px;font:normal 17px 'Liberation Sans', sans-serif;color:#000000;white-space:pre;">Parameters</div>
<div style="left:157.1px;top:400.1px;width:16.5px;height:1.0px;border-top:1px dotted #a0a0a0;"></div>
<svg style="left:174.6px;top:388.1px;" width="23" height="24" viewBox="0 0 23 24"><rect x="1.5" y="2" width="20" height="19" fill="#fff" stroke="#2e6fd0" stroke-width="1.6"/><rect x="1.5" y="2" width="20" height="3" fill="#2e6fd0"/><path d="M4 8h3M9 8h10M4 12h3M9 12h10M4 16h3M9 16h10" stroke="#333" stroke-width="1.4"/><circle cx="5" cy="20" r="3.2" fill="#8fd0f0" stroke="#222" stroke-width="1.4"/><circle cx="14" cy="20" r="3.2" fill="#8fd0f0" stroke="#222" stroke-width="1.4"/><path d="M8 20h3M2 18l5-5M17 18l5-5" stroke="#222" stroke-width="1.2"/></svg>
<div class="t" style="left:207.0px;top:390.1px;height:20px;line-height:20px;font:normal 17px 'Liberation Sans', sans-serif;color:#000000;white-space:pre;">Status variables</div>
<div style="left:129.9px;top:426.0px;width:16.5px;height:1.0px;border-top:1px dotted #a0a0a0;"></div>
<div style="left:123.4px;top:419.5px;width:13.0px;height:13.0px;background:#fff;border:1px solid #9c9c9c;"></div><div style="left:126.4px;top:425.25px;width:7.0px;height:1.5px;background:#111;"></div>
<svg style="left:147.4px;top:414.0px;" width="23" height="24" viewBox="0 0 23 24"><rect x="0.5" y="0.5" width="7.5" height="22" fill="#111"/><rect x="2" y="2" width="4.5" height="5.5" fill="#f5d21a"/><rect x="2" y="9" width="4.5" height="5" fill="#2030d0"/><rect x="2" y="15.5" width="4.5" height="5.5" fill="#f5d21a"/><path d="M8 5h13M17 2l4 3-4 3M22 11H9M13 8l-4 3 4 3M8 18h13M17 15l4 3-4 3" fill="none" stroke="#1a3fd8" stroke-width="1.8"/></svg>
<div class="t" style="left:179.8px;top:416.0px;height:20px;line-height:20px;font:normal 17px 'Liberation Sans', sans-serif;color:#000000;white-space:pre;">Local IO Mapping</div>
<div style="left:157.1px;top:451.9px;width:16.5px;height:1.0px;border-top:1px dotted #a0a0a0;"></div>
<svg style="left:174.6px;top:439.9px;" width="23" height="24" viewBox="0 0 23 24"><rect x="0.5" y="0.5" width="7.5" height="22" fill="#111"/><rect x="2" y="2" width="4.5" height="5.5" fill="#f5d21a"/><rect x="2" y="9" width="4.5" height="5" fill="#2030d0"/><rect x="2" y="15.5" width="4.5" height="5.5" fill="#f5d21a"/><path d="M8 5h13M17 2l4 3-4 3M22 11H9M13 8l-4 3 4 3M8 18h13M17 15l4 3-4 3" fill="none" stroke="#1a3fd8" stroke-width="1.8"/></svg>
<div class="t" style="left:207.0px;top:441.9px;height:20px;line-height:20px;font:normal 17px 'Liberation Sans', sans-serif;color:#000000;white-space:pre;">Programmable Inputs</div>
<div style="left:157.1px;top:477.79999999999995px;width:16.5px;height:1.0px;border-top:1px dotted #a0a0a0;"></div>
<svg style="left:174.6px;top:465.79999999999995px;" width="23" height="24" viewBox="0 0 23 24"><rect x="0.5" y="0.5" width="7.5" height="22" fill="#111"/><rect x="2" y="2" width="4.5" height="5.5" fill="#f5d21a"/><rect x="2" y="9" width="4.5" height="5" fill="#2030d0"/><rect x="2" y="15.5" width="4.5" height="5.5" fill="#f5d21a"/><path d="M8 5h13M17 2l4 3-4 3M22 11H9M13 8l-4 3 4 3M8 18h13M17 15l4 3-4 3" fill="none" stroke="#1a3fd8" stroke-width="1.8"/></svg>
<div class="t" style="left:207.0px;top:467.8px;height:20px;line-height:20px;font:normal 17px 'Liberation Sans', sans-serif;color:#000000;white-space:pre;">Relay Outputs</div>
<div style="left:157.1px;top:503.7px;width:16.5px;height:1.0px;border-top:1px dotted #a0a0a0;"></div>
<svg style="left:174.6px;top:491.7px;" width="23" height="24" viewBox="0 0 23 24"><rect x="0.5" y="0.5" width="7.5" height="22" fill="#111"/><rect x="2" y="2" width="4.5" height="5.5" fill="#f5d21a"/><rect x="2" y="9" width="4.5" height="5" fill="#2030d0"/><rect x="2" y="15.5" width="4.5" height="5.5" fill="#f5d21a"/><path d="M8 5h13M17 2l4 3-4 3M22 11H9M13 8l-4 3 4 3M8 18h13M17 15l4 3-4 3" fill="none" stroke="#1a3fd8" stroke-width="1.8"/></svg>
<div class="t" style="left:207.0px;top:493.7px;height:20px;line-height:20px;font:normal 17px 'Liberation Sans', sans-serif;color:#000000;white-space:pre;">LED Outputs</div>
<div style="left:157.1px;top:529.6px;width:16.5px;height:1.0px;border-top:1px dotted #a0a0a0;"></div>
<svg style="left:174.6px;top:517.6px;" width="23" height="24" viewBox="0 0 23 24"><rect x="0.5" y="0.5" width="7.5" height="22" fill="#111"/><rect x="2" y="2" width="4.5" height="5.5" fill="#f5d21a"/><rect x="2" y="9" width="4.5" height="5" fill="#2030d0"/><rect x="2" y="15.5" width="4.5" height="5.5" fill="#f5d21a"/><path d="M8 5h13M17 2l4 3-4 3M22 11H9M13 8l-4 3 4 3M8 18h13M17 15l4 3-4 3" fill="none" stroke="#1a3fd8" stroke-width="1.8"/></svg>
<div class="t" style="left:207.0px;top:519.6px;height:20px;line-height:20px;font:normal 17px 'Liberation Sans', sans-serif;color:#000000;white-space:pre;">Button inputs</div>
<div style="left:129.9px;top:555.5px;width:16.5px;height:1.0px;border-top:1px dotted #a0a0a0;"></div>
<svg style="left:147.4px;top:543.5px;" width="23" height="24" viewBox="0 0 23 24"><path d="M4 3h12l-2 8H6z" fill="#d8d8d8" stroke="#888" stroke-width="1.2"/><path d="M10 11c0 5 2 7 6 7s4 3 5 4" fill="none" stroke="#999" stroke-width="2.6"/></svg>
<div class="t" style="left:179.8px;top:545.5px;height:20px;line-height:20px;font:normal 17px 'Liberation Sans', sans-serif;color:#000000;white-space:pre;">RS485 SerialPort</div>
<div style="left:129.9px;top:581.4px;width:16.5px;height:1.0px;border-top:1px dotted #a0a0a0;"></div>
<div style="left:123.4px;top:574.9px;width:13.0px;height:13.0px;background:#fff;border:1px solid #9c9c9c;"></div><div style="left:126.4px;top:580.65px;width:7.0px;height:1.5px;background:#111;"></div>
<svg style="left:147.4px;top:569.4px;" width="23" height="24" viewBox="0 0 23 24"><rect x="0" y="0" width="22" height="22" fill="#e6e6e6"/><path d="M3 2h16v10l-3 3v4H6v-4l-3-3z" fill="#222"/><path d="M6 2v8M9 2v8M12 2v8M15 2v8" stroke="#d89030" stroke-width="1.6"/></svg>
<div class="t" style="left:179.8px;top:571.4px;height:20px;line-height:20px;font:normal 17px 'Liberation Sans', sans-serif;color:#000000;white-space:pre;">Ethernet</div>
<div style="left:157.1px;top:607.3px;width:16.5px;height:1.0px;border-top:1px dotted #a0a0a0;"></div>
<div style="left:150.6px;top:600.8px;width:13.0px;height:13.0px;background:#fff;border:1px solid #9c9c9c;"></div><div style="left:153.6px;top:606.55px;width:7.0px;height:1.5px;background:#111;"></div>
<svg style="left:174.6px;top:595.3px;" width="23" height="24" viewBox="0 0 23 24"><rect x="1" y="2" width="10" height="20" rx="2" fill="#fff" stroke="#111" stroke-width="1.6"/><rect x="12" y="2" width="10" height="20" rx="2" fill="#fff" stroke="#111" stroke-width="1.6"/><rect x="1" y="2" width="10" height="4" fill="#1aa040"/><rect x="12" y="2" width="10" height="4" fill="#1aa040"/><path d="M4 9v9M8 9v9M15 9v9M19 9v9" stroke="#c03030" stroke-width="1" stroke-dasharray="1.5 1.5"/></svg>
<div class="t" style="left:207.0px;top:597.3px;height:20px;line-height:20px;font:normal 17px 'Liberation Sans', sans-serif;color:#000000;white-space:pre;">Generic Modbus_1</div>
<div style="left:184.3px;top:633.2px;width:16.5px;height:1.0px;border-top:1px dotted #a0a0a0;"></div>
<svg style="left:201.8px;top:621.2px;" width="23" height="24" viewBox="0 0 23 24"><path d="M3 2l15 10v8L3 10z" fill="#cfcfcf" stroke="#bbb" stroke-width="1"/></svg>
<div class="t" style="left:234.2px;top:623.2px;height:20px;line-height:20px;font:normal 17px 'Liberation Sans', sans-serif;color:#000000;white-space:pre;">Modbus FC-04_1</div>
<div style="left:129.9px;top:659.0999999999999px;width:16.5px;height:1.0px;border-top:1px dotted #a0a0a0;"></div>
<div style="left:123.4px;top:652.5999999999999px;width:13.0px;height:13.0px;background:#fff;border:1px solid #9c9c9c;"></div><div style="left:126.4px;top:658.3499999999999px;width:7.0px;height:1.5px;background:#111;"></div>
<svg style="left:147.4px;top:647.0999999999999px;" width="23" height="24" viewBox="0 0 23 24"><rect x="9" y="1" width="6" height="21" fill="#111"/><rect x="10" y="3" width="4" height="4" fill="#f0d020"/><rect x="10" y="9" width="4" height="5" fill="#2030d0"/><rect x="10" y="16" width="4" height="4" fill="#f0d020"/><path d="M1 5h20M18 2l3 3-3 3M23 11H2M5 8l-3 3 3 3M1 18h20M18 15l3 3-3 3" fill="none" stroke="#1a3fd8" stroke-width="1.6"/></svg>
<div class="t" style="left:179.8px;top:649.1px;height:20px;line-height:20px;font:normal 17px 'Liberation Sans', sans-serif;color:#000000;white-space:pre;">Shared variables</div>
<div style="left:157.1px;top:685.0px;width:16.5px;height:1.0px;border-top:1px dotted #a0a0a0;"></div>
<svg style="left:174.6px;top:673.0px;" width="23" height="24" viewBox="0 0 23 24"><rect x="9" y="1" width="6" height="21" fill="#111"/><rect x="10" y="3" width="4" height="4" fill="#f0d020"/><rect x="10" y="9" width="4" height="5" fill="#2030d0"/><rect x="10" y="16" width="4" height="4" fill="#f0d020"/><path d="M1 5h20M18 2l3 3-3 3M23 11H2M5 8l-3 3 3 3M1 18h20M18 15l3 3-3 3" fill="none" stroke="#1a3fd8" stroke-width="1.6"/></svg>
<div class="t" style="left:207.0px;top:675.0px;height:20px;line-height:20px;font:normal 17px 'Liberation Sans', sans-serif;color:#000000;white-space:pre;">Inputs</div>
<div style="left:157.1px;top:710.9px;width:16.5px;height:1.0px;border-top:1px dotted #a0a0a0;"></div>
<svg style="left:174.6px;top:698.9px;" width="23" height="24" viewBox="0 0 23 24"><rect x="9" y="1" width="6" height="21" fill="#111"/><rect x="10" y="3" width="4" height="4" fill="#f0d020"/><rect x="10" y="9" width="4" height="5" fill="#2030d0"/><rect x="10" y="16" width="4" height="4" fill="#f0d020"/><path d="M1 5h20M18 2l3 3-3 3M23 11H2M5 8l-3 3 3 3M1 18h20M18 15l3 3-3 3" fill="none" stroke="#1a3fd8" stroke-width="1.6"/></svg>
<div class="t" style="left:207.0px;top:700.9px;height:20px;line-height:20px;font:normal 17px 'Liberation Sans', sans-serif;color:#000000;white-space:pre;">Outputs</div>
<div style="left:129.9px;top:736.8px;width:16.5px;height:1.0px;border-top:1px dotted #a0a0a0;"></div>
<div style="left:123.4px;top:730.3px;width:13.0px;height:13.0px;background:#fff;border:1px solid #9c9c9c;"></div><div style="left:126.4px;top:736.05px;width:7.0px;height:1.5px;background:#111;"></div>
<svg style="left:147.4px;top:724.8px;" width="23" height="24" viewBox="0 0 23 24"><path d="M8 3h-2a4 4 0 0 0-4 4v10a4 4 0 0 0 4 4h3M14 3h2a4 4 0 0 1 4 4v3" fill="none" stroke="#333" stroke-width="1.8"/><path d="M11 21l9-9" stroke="#333" stroke-width="3"/></svg>
<div style="left:175.5px;top:723px;width:55.5px;height:25.5px;background:#0e7f86;"></div>
<div class="t" style="left:178.8px;top:726.8px;height:20px;line-height:20px;font:normal 17px 'Liberation Sans', sans-serif;color:#ffffff;white-space:pre;letter-spacing:-0.4px;">Sketch</div>
<div style="left:157.1px;top:762.7px;width:16.5px;height:1.0px;border-top:1px dotted #a0a0a0;"></div>
<svg style="left:174.6px;top:750.7px;" width="23" height="24" viewBox="0 0 23 24"><path d="M4 3v15a3 3 0 0 0 3 3h3" fill="none" stroke="#333" stroke-width="1.8"/><path d="M12 20l8-8" stroke="#333" stroke-width="3"/><path d="M6 0h8" stroke="#333" stroke-width="1.5"/></svg>
<div class="t" style="left:207.0px;top:752.7px;height:20px;line-height:20px;font:normal 17px 'Liberation Sans', sans-serif;color:#000000;white-space:pre;">Libraries</div>
<div style="left:138px;top:714px;width:103px;height:43.5px;border:6px solid #dcee50;"></div>
<svg style="left:229.5px;top:702px;" width="24" height="24" viewBox="0 0 24 24"><circle cx="12" cy="12" r="11.8" fill="#6b6b6b"/><text x="12" y="17.5" font-size="16" font-family="Liberation Sans" font-weight="bold" fill="#fff" text-anchor="middle">2</text></svg>
<div style="left:65px;top:1224px;width:86px;height:26px;background:#dde2e4;"></div>
<svg style="left:73px;top:1227px" width="20" height="21" viewBox="0 0 20 20" preserveAspectRatio="none"><rect x="0.5" y="1" width="18" height="15.5" fill="#ececec"/><rect x="0" y="0" width="19.5" height="4" fill="#3a3a3a"/><rect x="17" y="0" width="2.5" height="16" fill="#3a3a3a"/><rect x="1.2" y="8.2" width="10" height="10.6" fill="#ececec" stroke="#3a3a3a" stroke-width="2.4"/><rect x="4.2" y="11.2" width="4" height="4.5" fill="#3a3a3a"/><path d="M12 16h4" stroke="#5aa9ae" stroke-width="2"/></svg>
<div class="t" style="left:97.5px;top:1227.5px;height:20px;line-height:20px;font:normal 17px 'Liberation Sans', sans-serif;color:#000;white-space:pre;">Project</div>
<div style="left:156px;top:1224px;width:120px;height:26px;background:#f7f9f9;"></div>
<svg style="left:163px;top:1226px;" width="23" height="23" viewBox="0 0 23 23"><rect x="3" y="1" width="19" height="15" fill="#e8e8e8" stroke="#222" stroke-width="1.6"/><rect x="5" y="4" width="15" height="3" fill="#3a8fd8"/><rect x="1" y="9" width="13" height="8" fill="#2e7fd0" stroke="#222" stroke-width="1"/><rect x="6" y="13" width="13" height="10" fill="#e8e8e8" stroke="#222" stroke-width="1.6"/><rect x="10" y="17" width="5" height="3" fill="#e5c12a"/></svg>
<div class="t" style="left:191.5px;top:1227.5px;height:20px;line-height:20px;font:normal 17px 'Liberation Sans', sans-serif;color:#1b8a93;white-space:pre;letter-spacing:-0.5px;">Resources</div>
<div style="left:150px;top:1213.5px;width:131.5px;height:43.5px;border:6px solid #dcee50;"></div>
<svg style="left:270px;top:1201px;" width="24" height="24" viewBox="0 0 24 24"><circle cx="12" cy="12" r="11.8" fill="#6b6b6b"/><text x="12" y="17.5" font-size="16" font-family="Liberation Sans" font-weight="bold" fill="#fff" text-anchor="middle">1</text></svg>
<div style="left:417px;top:255px;width:1402px;height:963px;background:#ffffff;border:1px solid #b4b4b4;"></div>
<div style="left:418px;top:256px;width:1376px;height:57px;background:#1f1f1f;"></div>
<div style="left:418px;top:264px;width:1376px;height:42px;line-height:42px;text-align:center;font:bold 34.5px 'Liberation Sans', sans-serif;color:#fff;">Sketch Editor</div>
<div style="left:418px;top:313px;width:73px;height:904px;background:#efefef;"></div>
<div style="left:1794px;top:256px;width:24px;height:961px;background:#f0f0f0;"></div>
<div style="left:1796px;top:305px;width:21px;height:814px;background:#cdcdcd;"></div>
<svg style="left:1797px;top:279px;" width="18" height="16" viewBox="0 0 18 16"><path d="M2 13L9 5l7 8" fill="none" stroke="#606060" stroke-width="3"/></svg>
<svg style="left:1797px;top:1180px;" width="18" height="16" viewBox="0 0 18 16"><path d="M2 3l7 8 7-8" fill="none" stroke="#606060" stroke-width="3"/></svg>
<div style="left:418px;top:969px;width:73px;height:27px;background:#d7d7d7;"></div>
<div style="left:420px;top:317.3px;width:52px;height:28px;line-height:28px;text-align:right;font:21px 'Liberation Mono', monospace;color:#2b2b2b;-webkit-text-stroke:0.25px #2b2b2b;">1</div>
<div style="left:496.5px;top:317.3px;height:28px;line-height:28px;font:21px 'Liberation Mono', monospace;letter-spacing:0.08px;white-space:pre;-webkit-text-stroke:0.25px currentColor;"><span style="color:#468e83;-webkit-text-stroke:0.25px #468e83">// shared variables can be accessed with PLCIn.varname and PLCOut.varname</span></div>
<div style="left:420px;top:344.6px;width:52px;height:28px;line-height:28px;text-align:right;font:21px 'Liberation Mono', monospace;color:#2b2b2b;-webkit-text-stroke:0.25px #2b2b2b;">2</div>
<div style="left:420px;top:371.9px;width:52px;height:28px;line-height:28px;text-align:right;font:21px 'Liberation Mono', monospace;color:#2b2b2b;-webkit-text-stroke:0.25px #2b2b2b;">3</div>
<div style="left:420px;top:399.2px;width:52px;height:28px;line-height:28px;text-align:right;font:21px 'Liberation Mono', monospace;color:#2b2b2b;-webkit-text-stroke:0.25px #2b2b2b;">4</div>
<div style="left:496.5px;top:399.2px;height:28px;line-height:28px;font:21px 'Liberation Mono', monospace;letter-spacing:0.08px;white-space:pre;-webkit-text-stroke:0.25px currentColor;"><span style="color:#468e83;-webkit-text-stroke:0.25px #468e83">// Enable usage of EtherClass, to set static IP address and other</span></div>
<div style="left:420px;top:426.5px;width:52px;height:28px;line-height:28px;text-align:right;font:21px 'Liberation Mono', monospace;color:#2b2b2b;-webkit-text-stroke:0.25px #2b2b2b;">5</div>
<div style="left:496.5px;top:426.5px;height:28px;line-height:28px;font:21px 'Liberation Mono', monospace;letter-spacing:0.08px;white-space:pre;-webkit-text-stroke:0.25px currentColor;"><span style="color:#1c1cd8;-webkit-text-stroke:0.25px #1c1cd8">#include</span><span style="color:#1a1a1a;-webkit-text-stroke:0.25px #1a1a1a"> </span><span style="color:#c81818;-webkit-text-stroke:0.25px #c81818">&lt;PortentaEthernet.h&gt;</span></div>
<div style="left:420px;top:453.8px;width:52px;height:28px;line-height:28px;text-align:right;font:21px 'Liberation Mono', monospace;color:#2b2b2b;-webkit-text-stroke:0.25px #2b2b2b;">6</div>
<div style="left:496.5px;top:453.8px;height:28px;line-height:28px;font:21px 'Liberation Mono', monospace;letter-spacing:0.08px;white-space:pre;-webkit-text-stroke:0.25px currentColor;"><span style="color:#1a1a1a;-webkit-text-stroke:0.25px #1a1a1a">arduino::EthernetClass eth(</span><span style="color:#8a8a8a;-webkit-text-stroke:0.25px #8a8a8a">&amp;</span><span style="color:#1a1a1a;-webkit-text-stroke:0.25px #1a1a1a">m_netInterface);</span></div>
<div style="left:420px;top:481.1px;width:52px;height:28px;line-height:28px;text-align:right;font:21px 'Liberation Mono', monospace;color:#2b2b2b;-webkit-text-stroke:0.25px #2b2b2b;">7</div>
<div style="left:420px;top:508.4px;width:52px;height:28px;line-height:28px;text-align:right;font:21px 'Liberation Mono', monospace;color:#2b2b2b;-webkit-text-stroke:0.25px #2b2b2b;">8</div>
<div style="left:420px;top:535.7px;width:52px;height:28px;line-height:28px;text-align:right;font:21px 'Liberation Mono', monospace;color:#2b2b2b;-webkit-text-stroke:0.25px #2b2b2b;">9</div>
<div style="left:496.5px;top:535.7px;height:28px;line-height:28px;font:21px 'Liberation Mono', monospace;letter-spacing:0.08px;white-space:pre;-webkit-text-stroke:0.25px currentColor;"><span style="color:#1c1cd8;-webkit-text-stroke:0.25px #1c1cd8">void</span><span style="color:#1a1a1a;-webkit-text-stroke:0.25px #1a1a1a"> setup()</span></div>
<div style="left:420px;top:563.0px;width:52px;height:28px;line-height:28px;text-align:right;font:21px 'Liberation Mono', monospace;color:#2b2b2b;-webkit-text-stroke:0.25px #2b2b2b;">10</div>
<div style="left:496.5px;top:563.0px;height:28px;line-height:28px;font:21px 'Liberation Mono', monospace;letter-spacing:0.08px;white-space:pre;-webkit-text-stroke:0.25px currentColor;"><span style="color:#1a1a1a;-webkit-text-stroke:0.25px #1a1a1a">{</span></div>
<div style="left:420px;top:590.3px;width:52px;height:28px;line-height:28px;text-align:right;font:21px 'Liberation Mono', monospace;color:#2b2b2b;-webkit-text-stroke:0.25px #2b2b2b;">11</div>
<div style="left:420px;top:617.6px;width:52px;height:28px;line-height:28px;text-align:right;font:21px 'Liberation Mono', monospace;color:#2b2b2b;-webkit-text-stroke:0.25px #2b2b2b;">12</div>
<div style="left:496.5px;top:617.6px;height:28px;line-height:28px;font:21px 'Liberation Mono', monospace;letter-spacing:0.08px;white-space:pre;-webkit-text-stroke:0.25px currentColor;"><span style="color:#1a1a1a;-webkit-text-stroke:0.25px #1a1a1a">    </span><span style="color:#468e83;-webkit-text-stroke:0.25px #468e83">// Configure static IP address</span></div>
<div style="left:420px;top:644.9px;width:52px;height:28px;line-height:28px;text-align:right;font:21px 'Liberation Mono', monospace;color:#2b2b2b;-webkit-text-stroke:0.25px #2b2b2b;">13</div>
<div style="left:496.5px;top:644.9px;height:28px;line-height:28px;font:21px 'Liberation Mono', monospace;letter-spacing:0.08px;white-space:pre;-webkit-text-stroke:0.25px currentColor;"><span style="color:#1a1a1a;-webkit-text-stroke:0.25px #1a1a1a">    IPAddress ip(</span><span style="color:#2a2ad0;-webkit-text-stroke:0.25px #2a2ad0">10</span><span style="color:#1a1a1a;-webkit-text-stroke:0.25px #1a1a1a">, </span><span style="color:#2a2ad0;-webkit-text-stroke:0.25px #2a2ad0">0</span><span style="color:#1a1a1a;-webkit-text-stroke:0.25px #1a1a1a">, </span><span style="color:#2a2ad0;-webkit-text-stroke:0.25px #2a2ad0">0</span><span style="color:#1a1a1a;-webkit-text-stroke:0.25px #1a1a1a">, </span><span style="color:#2a2ad0;-webkit-text-stroke:0.25px #2a2ad0">227</span><span style="color:#1a1a1a;-webkit-text-stroke:0.25px #1a1a1a">);</span></div>
<div style="left:420px;top:672.2px;width:52px;height:28px;line-height:28px;text-align:right;font:21px 'Liberation Mono', monospace;color:#2b2b2b;-webkit-text-stroke:0.25px #2b2b2b;">14</div>
<div style="left:496.5px;top:672.2px;height:28px;line-height:28px;font:21px 'Liberation Mono', monospace;letter-spacing:0.08px;white-space:pre;-webkit-text-stroke:0.25px currentColor;"><span style="color:#1a1a1a;-webkit-text-stroke:0.25px #1a1a1a">    IPAddress dns(</span><span style="color:#2a2ad0;-webkit-text-stroke:0.25px #2a2ad0">10</span><span style="color:#1a1a1a;-webkit-text-stroke:0.25px #1a1a1a">, </span><span style="color:#2a2ad0;-webkit-text-stroke:0.25px #2a2ad0">0</span><span style="color:#1a1a1a;-webkit-text-stroke:0.25px #1a1a1a">, </span><span style="color:#2a2ad0;-webkit-text-stroke:0.25px #2a2ad0">0</span><span style="color:#1a1a1a;-webkit-text-stroke:0.25px #1a1a1a">, </span><span style="color:#2a2ad0;-webkit-text-stroke:0.25px #2a2ad0">1</span><span style="color:#1a1a1a;-webkit-text-stroke:0.25px #1a1a1a">);</span></div>
<div style="left:420px;top:699.5px;width:52px;height:28px;line-height:28px;text-align:right;font:21px 'Liberation Mono', monospace;color:#2b2b2b;-webkit-text-stroke:0.25px #2b2b2b;">15</div>
<div style="left:496.5px;top:699.5px;height:28px;line-height:28px;font:21px 'Liberation Mono', monospace;letter-spacing:0.08px;white-space:pre;-webkit-text-stroke:0.25px currentColor;"><span style="color:#1a1a1a;-webkit-text-stroke:0.25px #1a1a1a">    IPAddress gateway(</span><span style="color:#2a2ad0;-webkit-text-stroke:0.25px #2a2ad0">10</span><span style="color:#1a1a1a;-webkit-text-stroke:0.25px #1a1a1a">, </span><span style="color:#2a2ad0;-webkit-text-stroke:0.25px #2a2ad0">0</span><span style="color:#1a1a1a;-webkit-text-stroke:0.25px #1a1a1a">, </span><span style="color:#2a2ad0;-webkit-text-stroke:0.25px #2a2ad0">0</span><span style="color:#1a1a1a;-webkit-text-stroke:0.25px #1a1a1a">, </span><span style="color:#2a2ad0;-webkit-text-stroke:0.25px #2a2ad0">1</span><span style="color:#1a1a1a;-webkit-text-stroke:0.25px #1a1a1a">);</span></div>
<div style="left:420px;top:726.8px;width:52px;height:28px;line-height:28px;text-align:right;font:21px 'Liberation Mono', monospace;color:#2b2b2b;-webkit-text-stroke:0.25px #2b2b2b;">16</div>
<div style="left:496.5px;top:726.8px;height:28px;line-height:28px;font:21px 'Liberation Mono', monospace;letter-spacing:0.08px;white-space:pre;-webkit-text-stroke:0.25px currentColor;"><span style="color:#1a1a1a;-webkit-text-stroke:0.25px #1a1a1a">    IPAddress subnet(</span><span style="color:#2a2ad0;-webkit-text-stroke:0.25px #2a2ad0">255</span><span style="color:#1a1a1a;-webkit-text-stroke:0.25px #1a1a1a">, </span><span style="color:#2a2ad0;-webkit-text-stroke:0.25px #2a2ad0">255</span><span style="color:#1a1a1a;-webkit-text-stroke:0.25px #1a1a1a">, </span><span style="color:#2a2ad0;-webkit-text-stroke:0.25px #2a2ad0">255</span><span style="color:#1a1a1a;-webkit-text-stroke:0.25px #1a1a1a">, </span><span style="color:#2a2ad0;-webkit-text-stroke:0.25px #2a2ad0">0</span><span style="color:#1a1a1a;-webkit-text-stroke:0.25px #1a1a1a">);</span></div>
<div style="left:420px;top:754.1px;width:52px;height:28px;line-height:28px;text-align:right;font:21px 'Liberation Mono', monospace;color:#2b2b2b;-webkit-text-stroke:0.25px #2b2b2b;">17</div>
<div style="left:496.5px;top:754.1px;height:28px;line-height:28px;font:21px 'Liberation Mono', monospace;letter-spacing:0.08px;white-space:pre;-webkit-text-stroke:0.25px currentColor;"><span style="color:#1a1a1a;-webkit-text-stroke:0.25px #1a1a1a">    </span><span style="color:#468e83;-webkit-text-stroke:0.25px #468e83">// If cable is not connected this will block the start of PLC with about 60s of timeout!</span></div>
<div style="left:420px;top:781.4px;width:52px;height:28px;line-height:28px;text-align:right;font:21px 'Liberation Mono', monospace;color:#2b2b2b;-webkit-text-stroke:0.25px #2b2b2b;">18</div>
<div style="left:496.5px;top:781.4px;height:28px;line-height:28px;font:21px 'Liberation Mono', monospace;letter-spacing:0.08px;white-space:pre;-webkit-text-stroke:0.25px currentColor;"><span style="color:#1a1a1a;-webkit-text-stroke:0.25px #1a1a1a">    eth.begin(ip, dns, gateway, subnet);</span></div>
<div style="left:420px;top:808.7px;width:52px;height:28px;line-height:28px;text-align:right;font:21px 'Liberation Mono', monospace;color:#2b2b2b;-webkit-text-stroke:0.25px #2b2b2b;">19</div>
<div style="left:420px;top:836.0px;width:52px;height:28px;line-height:28px;text-align:right;font:21px 'Liberation Mono', monospace;color:#2b2b2b;-webkit-text-stroke:0.25px #2b2b2b;">20</div>
<div style="left:496.5px;top:836.0px;height:28px;line-height:28px;font:21px 'Liberation Mono', monospace;letter-spacing:0.08px;white-space:pre;-webkit-text-stroke:0.25px currentColor;"><span style="color:#1a1a1a;-webkit-text-stroke:0.25px #1a1a1a">}</span></div>
<div style="left:420px;top:863.3px;width:52px;height:28px;line-height:28px;text-align:right;font:21px 'Liberation Mono', monospace;color:#2b2b2b;-webkit-text-stroke:0.25px #2b2b2b;">21</div>
<div style="left:420px;top:890.6px;width:52px;height:28px;line-height:28px;text-align:right;font:21px 'Liberation Mono', monospace;color:#2b2b2b;-webkit-text-stroke:0.25px #2b2b2b;">22</div>
<div style="left:496.5px;top:890.6px;height:28px;line-height:28px;font:21px 'Liberation Mono', monospace;letter-spacing:0.08px;white-space:pre;-webkit-text-stroke:0.25px currentColor;"><span style="color:#1c1cd8;-webkit-text-stroke:0.25px #1c1cd8">void</span><span style="color:#1a1a1a;-webkit-text-stroke:0.25px #1a1a1a"> loop()</span></div>
<div style="left:420px;top:917.9px;width:52px;height:28px;line-height:28px;text-align:right;font:21px 'Liberation Mono', monospace;color:#2b2b2b;-webkit-text-stroke:0.25px #2b2b2b;">23</div>
<div style="left:496.5px;top:917.9px;height:28px;line-height:28px;font:21px 'Liberation Mono', monospace;letter-spacing:0.08px;white-space:pre;-webkit-text-stroke:0.25px currentColor;"><span style="color:#1a1a1a;-webkit-text-stroke:0.25px #1a1a1a">{</span></div>
<div style="left:420px;top:945.2px;width:52px;height:28px;line-height:28px;text-align:right;font:21px 'Liberation Mono', monospace;color:#2b2b2b;-webkit-text-stroke:0.25px #2b2b2b;">24</div>
<div style="left:420px;top:972.5px;width:52px;height:28px;line-height:28px;text-align:right;font:21px 'Liberation Mono', monospace;color:#2b2b2b;-webkit-text-stroke:0.25px #2b2b2b;">25</div>
<div style="left:496.5px;top:972.5px;height:28px;line-height:28px;font:21px 'Liberation Mono', monospace;letter-spacing:0.08px;white-space:pre;-webkit-text-stroke:0.25px currentColor;"><span style="color:#1a1a1a;-webkit-text-stroke:0.25px #1a1a1a">}</span></div>
<svg style="left:478px;top:571.0px;" width="8" height="5" viewBox="0 0 8 5"><path d="M0 0h8L4 5z" fill="#707070"/></svg>
<svg style="left:478px;top:925.9000000000001px;" width="8" height="5" viewBox="0 0 8 5"><path d="M0 0h8L4 5z" fill="#707070"/></svg>
<div style="left:496px;top:912.9000000000001px;width:14.5px;height:29.5px;border:1px solid #c8c8c8;border-radius:3px;"></div>
<div style="left:496px;top:967.5px;width:14.5px;height:29.5px;border:1px solid #c8c8c8;border-radius:3px;"></div>
<div style="left:510.5px;top:969px;width:1.5px;height:27px;background:#555;"></div>
<div style="left:486px;top:379.5px;width:1198.5px;height:494.0px;border:6px solid #dcee50;"></div>
<svg style="left:1672.5px;top:367.5px;" width="24" height="24" viewBox="0 0 24 24"><circle cx="12" cy="12" r="11.8" fill="#6b6b6b"/><text x="12" y="17.5" font-size="16" font-family="Liberation Sans" font-weight="bold" fill="#fff" text-anchor="middle">3</text></svg>
<div style="left:415px;top:1224px;width:114px;height:26px;background:#fafafa;"></div>
<svg style="left:421px;top:1226px;" width="22" height="22" viewBox="0 0 22 22"><rect x="7" y="10.5" width="10" height="8" fill="none" stroke="#333" stroke-width="1.8"/><path d="M11 10V6h9v8h-3" fill="none" stroke="#333" stroke-width="1.8"/><path d="M3.5 3.5L12 12" stroke="#1a5fb4" stroke-width="3.2"/><path d="M0 1.5l2-1.5 2 2-2 2z" fill="#1a5fb4"/><path d="M11.5 11.5l2 1.5-2.5 0z" fill="#1a5fb4"/></svg>
<div class="t" style="left:449px;top:1227.5px;height:20px;line-height:20px;font:normal 17px 'Liberation Sans', sans-serif;color:#1b8a93;white-space:pre;letter-spacing:-0.5px;">Resources</div>
<svg style="left:1748px;top:1230px;" width="10" height="14" viewBox="0 0 10 14"><path d="M9 1L1 7l8 6z" fill="none" stroke="#a0a0a0" stroke-width="1.2"/></svg>
<svg style="left:1769px;top:1230px;" width="10" height="14" viewBox="0 0 10 14"><path d="M1 1l8 6-8 6z" fill="none" stroke="#a0a0a0" stroke-width="1.2"/></svg>
<svg style="left:1787px;top:1234px;" width="12" height="7" viewBox="0 0 12 7"><path d="M0 0h12L6 7z" fill="#707070"/></svg>
<svg style="left:1806px;top:1229px;" width="16" height="16" viewBox="0 0 16 16"><path d="M1 1L15 15M15 1L1 15" stroke="#555" stroke-width="2.2"/></svg>
<div style="left:1831px;top:250px;width:378px;height:31px;background:#f3f3f3;border:2px solid #c2c2c2;"></div><div style="left:1833px;top:251px;width:375px;height:28px;background:#1f1f1f;"></div><div class="t" style="left:1837px;top:255.5px;height:20px;line-height:20px;font:normal 17px 'Liberation Sans', sans-serif;color:#ffffff;white-space:pre;">Watch</div><svg style="left:2165px;top:258.0px;" width="12" height="15" viewBox="0 0 12 15"><rect x="3" y="0.8" width="6" height="7.5" fill="none" stroke="#fff" stroke-width="1.6"/><rect x="6" y="0" width="3" height="8" fill="#fff"/><path d="M0 9h12M6 9v6" stroke="#fff" stroke-width="2"/></svg><svg style="left:2189px;top:259.0px;" width="11" height="11" viewBox="0 0 11 11"><path d="M1 1L10 10M10 1L1 10" stroke="#fff" stroke-width="2.2"/></svg>
<svg style="left:1839.5px;top:290px" width="20.5" height="19.5" viewBox="0 0 20 20" preserveAspectRatio="none"><rect x="1" y="1" width="18" height="18" fill="none" stroke="#808080" stroke-width="1.8"/><rect x="1" y="1" width="18" height="3" fill="#808080"/><path d="M4 9h3M4 14h3" stroke="#808080" stroke-width="1.5"/><rect x="9" y="7.5" width="8" height="3" fill="none" stroke="#808080" stroke-width="1.3"/><rect x="9" y="12.5" width="8" height="3" fill="none" stroke="#808080" stroke-width="1.3"/></svg>
<svg style="left:1878px;top:290px" width="23" height="19.5" viewBox="0 0 20 20" preserveAspectRatio="none"><path d="M6 9V6a5 5 0 0 1 10 0v4" fill="none" stroke="#3a3a3a" stroke-width="2.2"/><path d="M1 17l5-6" stroke="#3a3a3a" stroke-width="2.6"/><circle cx="14" cy="13" r="6" fill="#d81818"/><rect x="11.5" y="10.5" width="5" height="5" fill="#fff"/></svg>
<svg style="left:1919.5px;top:290px" width="21.5" height="19.5" viewBox="0 0 20 20" preserveAspectRatio="none"><path d="M4 0v8M0 4h8" stroke="#1a9a1a" stroke-width="2.4"/><path d="M7 11l7-4 6 4v5l-7 4-6-4z" fill="#3a3a3a"/><path d="M7 11l7 4 6-4" fill="none" stroke="#777" stroke-width="1"/></svg>
<svg style="left:1958.5px;top:290px" width="20.5" height="19.5" viewBox="0 0 20 20" preserveAspectRatio="none"><rect x="0.5" y="1" width="18" height="15.5" fill="#f3f3f3"/><rect x="0" y="0" width="19.5" height="4" fill="#3a3a3a"/><rect x="17" y="0" width="2.5" height="16" fill="#3a3a3a"/><rect x="0" y="9" width="10" height="11" fill="#1d4fae"/><rect x="3.5" y="9" width="3" height="3.5" fill="#f3f3f3"/></svg>
<svg style="left:1990.5px;top:290px" width="20.5" height="19.5" viewBox="0 0 20 20" preserveAspectRatio="none"><rect x="0.5" y="1" width="18" height="15.5" fill="#f3f3f3"/><rect x="0" y="0" width="19.5" height="4" fill="#3a3a3a"/><rect x="17" y="0" width="2.5" height="16" fill="#3a3a3a"/><path d="M1.5 15a4 4 0 0 1 6.5-3" fill="none" stroke="#1f5fbf" stroke-width="2.2"/><path d="M7 9l3.5 3-4 1.5z" fill="#1f5fbf"/><path d="M2 19h7" stroke="#1f5fbf" stroke-width="2.2"/></svg>
<svg style="left:2022px;top:290px" width="20" height="19.5" viewBox="0 0 20 20" preserveAspectRatio="none"><rect x="0.5" y="1" width="18" height="15.5" fill="#f3f3f3"/><rect x="0" y="0" width="19.5" height="4" fill="#3a3a3a"/><rect x="17" y="0" width="2.5" height="16" fill="#3a3a3a"/><path d="M1.5 15a4 4 0 0 1 6.5-3" fill="none" stroke="#1f5fbf" stroke-width="2.2"/><path d="M7 9l3.5 3-4 1.5z" fill="#1f5fbf"/><path d="M2 19h7" stroke="#1f5fbf" stroke-width="2.2"/><path d="M15 0v9M10.5 4.5h9" stroke="#111" stroke-width="4"/><path d="M15 1v7M11.5 4.5h7" stroke="#1a9a1a" stroke-width="2.2"/></svg>
<svg style="left:2064px;top:290px" width="17" height="19.5" viewBox="0 0 20 20" preserveAspectRatio="none"><path d="M19 1l-8 8" stroke="#9a9a9a" stroke-width="2"/><path d="M3 13l5-5 4 4-5 5z" fill="#9a9a9a"/><path d="M1 17l3-3 2 2-3 3z" fill="#9a9a9a"/></svg>
<svg style="left:2109px;top:290px" width="10.5" height="19.5" viewBox="0 0 10 20" preserveAspectRatio="none"><path d="M5 18V7" stroke="#808080" stroke-width="3.4"/><path d="M0 9l5-7 5 7z" fill="#808080"/></svg>
<svg style="left:2140px;top:290px" width="10.5" height="19.5" viewBox="0 0 10 20" preserveAspectRatio="none"><path d="M5 2v11" stroke="#808080" stroke-width="3.4"/><path d="M0 11l5 7 5-7z" fill="#808080"/></svg>
<svg style="left:2177px;top:290px" width="19" height="19.5" viewBox="0 0 20 20" preserveAspectRatio="none"><rect x="1" y="8" width="11" height="11" fill="#f3f3f3" stroke="#808080" stroke-width="2"/><path d="M4 8V5h11v11h-3M7 5V2h12v11h-4" fill="none" stroke="#808080" stroke-width="1.8"/><path d="M4 14h5" stroke="#808080" stroke-width="1.6"/></svg>
<div style="left:1868.5px;top:285px;width:2.0px;height:31px;background:#cfcfcf;"></div>
<div style="left:1909px;top:285px;width:2px;height:31px;background:#cfcfcf;"></div>
<div style="left:1949px;top:285px;width:2px;height:31px;background:#cfcfcf;"></div>
<div style="left:2052.5px;top:285px;width:2.0px;height:31px;background:#cfcfcf;"></div>
<div style="left:2093px;top:285px;width:2px;height:31px;background:#cfcfcf;"></div>
<div style="left:2164.5px;top:285px;width:2.0px;height:31px;background:#cfcfcf;"></div>
<div style="left:1831px;top:319px;width:378px;height:936px;background:#ffffff;border:1px solid #b4b4b4;"></div>
<div class="t" style="left:1840px;top:326.0px;height:20px;line-height:20px;font:normal 17px 'Liberation Sans', sans-serif;color:#000;white-space:pre;">Symbol</div>
<div class="t" style="left:2041px;top:326.0px;height:20px;line-height:20px;font:normal 17px 'Liberation Sans', sans-serif;color:#000;white-space:pre;">Value</div>
<div class="t" style="left:2172px;top:326.0px;height:20px;line-height:20px;font:normal 17px 'Liberation Sans', sans-serif;color:#000;white-space:pre;">Type</div>
<div style="left:2031px;top:321px;width:1px;height:31px;border-left:1px dotted #cfcfcf;"></div>
<div style="left:2160.5px;top:321px;width:1.0px;height:31px;border-left:1px dotted #cfcfcf;"></div>
<div style="left:1832px;top:1229.5px;width:376px;height:20.5px;background:#ececec;"></div><div style="left:1857px;top:1230.5px;width:124.5px;height:19.5px;background:#cdcdcd;"></div><div style="left:1914.25px;top:1234.75px;width:2.0px;height:10.0px;background:#333;"></div><div style="left:1918.25px;top:1234.75px;width:2.0px;height:10.0px;background:#333;"></div><div style="left:1922.25px;top:1234.75px;width:2.0px;height:10.0px;background:#333;"></div><svg style="left:1838px;top:1232.75px;" width="10" height="14" viewBox="0 0 10 14"><path d="M8 1L2 7l6 6" fill="none" stroke="#111" stroke-width="2.6"/></svg><svg style="left:2191px;top:1232.75px;" width="10" height="14" viewBox="0 0 10 14"><path d="M2 1l6 6-6 6" fill="none" stroke="#111" stroke-width="2.6"/></svg>
<div style="left:2216px;top:250px;width:309px;height:31px;background:#f3f3f3;border:2px solid #c2c2c2;"></div><div style="left:2218px;top:251px;width:306px;height:28px;background:#1f1f1f;"></div><div class="t" style="left:2222px;top:255.5px;height:20px;line-height:20px;font:normal 17px 'Liberation Sans', sans-serif;color:#ffffff;white-space:pre;">Library Tree</div><svg style="left:2481px;top:258.0px;" width="12" height="15" viewBox="0 0 12 15"><rect x="3" y="0.8" width="6" height="7.5" fill="none" stroke="#fff" stroke-width="1.6"/><rect x="6" y="0" width="3" height="8" fill="#fff"/><path d="M0 9h12M6 9v6" stroke="#fff" stroke-width="2"/></svg><svg style="left:2505px;top:259.0px;" width="11" height="11" viewBox="0 0 11 11"><path d="M1 1L10 10M10 1L1 10" stroke="#fff" stroke-width="2.2"/></svg>
<svg style="left:2226px;top:290px" width="20" height="21.5" viewBox="0 0 20 20" preserveAspectRatio="none"><rect x="6" y="2" width="4" height="17" fill="#3a3a3a"/><rect x="11.5" y="4" width="4" height="15" fill="#3a3a3a"/><rect x="16" y="4" width="4" height="15" fill="#3a3a3a"/><path d="M7 6h2M7 14h2M12.5 8h2M12.5 14h2M17 8h2M17 14h2" stroke="#f3f3f3" stroke-width="1.3"/><path d="M1 4l3 3-3 3zM4 12l-3 3 3 3z" fill="#1b3a8f"/></svg>
<svg style="left:2255px;top:290px" width="22" height="21.5" viewBox="0 0 20 20" preserveAspectRatio="none"><rect x="6" y="2" width="4" height="17" fill="#3a3a3a"/><rect x="11.5" y="4" width="4" height="15" fill="#3a3a3a"/><rect x="16" y="4" width="4" height="15" fill="#3a3a3a"/><path d="M7 6h2M7 14h2M12.5 8h2M12.5 14h2M17 8h2M17 14h2" stroke="#f3f3f3" stroke-width="1.3"/><path d="M2 12a4 4 0 0 1 7-2M9 16a4 4 0 0 1-7 2" fill="none" stroke="#1a9a1a" stroke-width="2"/></svg>
<div style="left:2216px;top:319px;width:310px;height:936px;background:#ffffff;border:1px solid #b4b4b4;"></div>
<div style="left:2281px;top:345.7px;width:1px;height:143.39999999999998px;border-left:1px dotted #a0a0a0;"></div>
<div style="left:2241px;top:333.7px;width:25px;height:1.0px;border-top:1px dotted #a0a0a0;"></div>
<div style="left:2234.5px;top:327.2px;width:13.0px;height:13.0px;background:#fff;border:1px solid #9c9c9c;"></div><div style="left:2237.5px;top:332.95px;width:7.0px;height:1.5px;background:#111;"></div>
<svg style="left:2268px;top:323.7px;" width="22" height="20" viewBox="0 0 22 20"><rect x="1" y="1" width="5" height="18" fill="#3a3a3a"/><rect x="8.5" y="0" width="5" height="19" fill="#3a3a3a"/><rect x="16" y="1" width="5" height="18" fill="#3a3a3a"/><path d="M2.5 5h2M2.5 15h2M10 5h2M10 15h2M17.5 5h2M17.5 15h2" stroke="#fff" stroke-width="1.4"/></svg>
<div class="t" style="left:2304px;top:323.7px;height:20px;line-height:20px;font:normal 17px 'Liberation Sans', sans-serif;color:#000;white-space:pre;">Project libraries</div>
<div style="left:2281px;top:359.59999999999997px;width:17px;height:1.0px;border-top:1px dotted #a0a0a0;"></div>
<div style="left:2274.5px;top:353.09999999999997px;width:13.0px;height:13.0px;background:#fff;border:1px solid #9c9c9c;"></div><div style="left:2277.5px;top:358.84999999999997px;width:7.0px;height:1.5px;background:#111;"></div><div style="left:2280.25px;top:356.09999999999997px;width:1.5px;height:7.0px;background:#111;"></div>
<svg style="left:2299px;top:345.59999999999997px;" width="35" height="27" viewBox="0 0 35 27"><rect x="1" y="9" width="4.5" height="17" fill="#3a3a3a"/><rect x="7" y="6" width="4.5" height="20" fill="#3a3a3a"/><rect x="13" y="14" width="4.5" height="12" fill="#3a3a3a"/><path d="M2 13h2.5M2 21h2.5M8 11h2.5M8 21h2.5M14 18h2.5M14 23h2.5" stroke="#fff" stroke-width="1.3"/><path d="M15 14V3l3-2h5l1 2h10v11z" fill="#2f86e0"/></svg>
<div class="t" style="left:2343px;top:349.6px;height:20px;line-height:20px;font:normal 17px 'Liberation Sans', sans-serif;color:#000;white-space:pre;">Operators and blocks</div>
<div style="left:2281px;top:385.5px;width:17px;height:1.0px;border-top:1px dotted #a0a0a0;"></div>
<div style="left:2274.5px;top:379.0px;width:13.0px;height:13.0px;background:#fff;border:1px solid #9c9c9c;"></div><div style="left:2277.5px;top:384.75px;width:7.0px;height:1.5px;background:#111;"></div><div style="left:2280.25px;top:382.0px;width:1.5px;height:7.0px;background:#111;"></div>
<svg style="left:2299px;top:371.5px;" width="35" height="27" viewBox="0 0 35 27"><rect x="1" y="9" width="4.5" height="17" fill="#3a3a3a"/><rect x="7" y="6" width="4.5" height="20" fill="#3a3a3a"/><rect x="13" y="14" width="4.5" height="12" fill="#3a3a3a"/><path d="M2 13h2.5M2 21h2.5M8 11h2.5M8 21h2.5M14 18h2.5M14 23h2.5" stroke="#fff" stroke-width="1.3"/><path d="M15 14V3l3-2h5l1 2h10v11z" fill="#2f86e0"/></svg>
<div class="t" style="left:2343px;top:375.5px;height:20px;line-height:20px;font:normal 17px 'Liberation Sans', sans-serif;color:#000;white-space:pre;">Target</div>
<div style="left:2281px;top:411.4px;width:17px;height:1.0px;border-top:1px dotted #a0a0a0;"></div>
<div style="left:2274.5px;top:404.9px;width:13.0px;height:13.0px;background:#fff;border:1px solid #9c9c9c;"></div><div style="left:2277.5px;top:410.65px;width:7.0px;height:1.5px;background:#111;"></div><div style="left:2280.25px;top:407.9px;width:1.5px;height:7.0px;background:#111;"></div>
<svg style="left:2299px;top:397.4px;" width="35" height="27" viewBox="0 0 35 27"><rect x="1" y="9" width="4.5" height="17" fill="#3a3a3a"/><rect x="7" y="6" width="4.5" height="20" fill="#3a3a3a"/><rect x="13" y="14" width="4.5" height="12" fill="#3a3a3a"/><path d="M2 13h2.5M2 21h2.5M8 11h2.5M8 21h2.5M14 18h2.5M14 23h2.5" stroke="#fff" stroke-width="1.3"/><path d="M15 14V3l3-2h5l1 2h10v11z" fill="#c4c4c4"/></svg>
<div class="t" style="left:2343px;top:401.4px;height:20px;line-height:20px;font:normal 17px 'Liberation Sans', sans-serif;color:#000;white-space:pre;">AIDatabase</div>
<div style="left:2281px;top:437.29999999999995px;width:17px;height:1.0px;border-top:1px dotted #a0a0a0;"></div>
<div style="left:2274.5px;top:430.79999999999995px;width:13.0px;height:13.0px;background:#fff;border:1px solid #9c9c9c;"></div><div style="left:2277.5px;top:436.54999999999995px;width:7.0px;height:1.5px;background:#111;"></div><div style="left:2280.25px;top:433.79999999999995px;width:1.5px;height:7.0px;background:#111;"></div>
<svg style="left:2299px;top:423.29999999999995px;" width="35" height="27" viewBox="0 0 35 27"><rect x="1" y="9" width="4.5" height="17" fill="#3a3a3a"/><rect x="7" y="6" width="4.5" height="20" fill="#3a3a3a"/><rect x="13" y="14" width="4.5" height="12" fill="#3a3a3a"/><path d="M2 13h2.5M2 21h2.5M8 11h2.5M8 21h2.5M14 18h2.5M14 23h2.5" stroke="#fff" stroke-width="1.3"/><path d="M15 14V3l3-2h5l1 2h10v11z" fill="#c4c4c4"/></svg>
<div class="t" style="left:2343px;top:427.3px;height:20px;line-height:20px;font:normal 17px 'Liberation Sans', sans-serif;color:#000;white-space:pre;">AIModbusRTU</div>
<div style="left:2281px;top:463.2px;width:17px;height:1.0px;border-top:1px dotted #a0a0a0;"></div>
<div style="left:2274.5px;top:456.7px;width:13.0px;height:13.0px;background:#fff;border:1px solid #9c9c9c;"></div><div style="left:2277.5px;top:462.45px;width:7.0px;height:1.5px;background:#111;"></div><div style="left:2280.25px;top:459.7px;width:1.5px;height:7.0px;background:#111;"></div>
<svg style="left:2299px;top:449.2px;" width="35" height="27" viewBox="0 0 35 27"><rect x="1" y="9" width="4.5" height="17" fill="#3a3a3a"/><rect x="7" y="6" width="4.5" height="20" fill="#3a3a3a"/><rect x="13" y="14" width="4.5" height="12" fill="#3a3a3a"/><path d="M2 13h2.5M2 21h2.5M8 11h2.5M8 21h2.5M14 18h2.5M14 23h2.5" stroke="#fff" stroke-width="1.3"/><path d="M15 14V3l3-2h5l1 2h10v11z" fill="#c4c4c4"/></svg>
<div class="t" style="left:2343px;top:453.2px;height:20px;line-height:20px;font:normal 17px 'Liberation Sans', sans-serif;color:#000;white-space:pre;">AIModbusTCPMaster</div>
<div style="left:2281px;top:489.09999999999997px;width:17px;height:1.0px;border-top:1px dotted #a0a0a0;"></div>
<div style="left:2274.5px;top:482.59999999999997px;width:13.0px;height:13.0px;background:#fff;border:1px solid #9c9c9c;"></div><div style="left:2277.5px;top:488.34999999999997px;width:7.0px;height:1.5px;background:#111;"></div><div style="left:2280.25px;top:485.59999999999997px;width:1.5px;height:7.0px;background:#111;"></div>
<svg style="left:2299px;top:475.09999999999997px;" width="35" height="27" viewBox="0 0 35 27"><rect x="1" y="9" width="4.5" height="17" fill="#3a3a3a"/><rect x="7" y="6" width="4.5" height="20" fill="#3a3a3a"/><rect x="13" y="14" width="4.5" height="12" fill="#3a3a3a"/><path d="M2 13h2.5M2 21h2.5M8 11h2.5M8 21h2.5M14 18h2.5M14 23h2.5" stroke="#fff" stroke-width="1.3"/><path d="M15 14V3l3-2h5l1 2h10v11z" fill="#c4c4c4"/></svg>
<div class="t" style="left:2343px;top:479.1px;height:20px;line-height:20px;font:normal 17px 'Liberation Sans', sans-serif;color:#000;white-space:pre;">Standard</div>
<div style="left:2533px;top:250px;width:286px;height:31px;background:#f3f3f3;border:2px solid #c2c2c2;"></div><div style="left:2535px;top:251px;width:283px;height:28px;background:#1f1f1f;"></div><div class="t" style="left:2539px;top:255.5px;height:20px;line-height:20px;font:normal 17px 'Liberation Sans', sans-serif;color:#ffffff;white-space:pre;">Catalog</div><svg style="left:2775px;top:258.0px;" width="12" height="15" viewBox="0 0 12 15"><rect x="3" y="0.8" width="6" height="7.5" fill="none" stroke="#fff" stroke-width="1.6"/><rect x="6" y="0" width="3" height="8" fill="#fff"/><path d="M0 9h12M6 9v6" stroke="#fff" stroke-width="2"/></svg><svg style="left:2799px;top:259.0px;" width="11" height="11" viewBox="0 0 11 11"><path d="M1 1L10 10M10 1L1 10" stroke="#fff" stroke-width="2.2"/></svg>
<div style="left:2533px;top:282px;width:286px;height:1237px;background:#ffffff;border:1px solid #b4b4b4;"></div>
<div class="t" style="left:2543px;top:289.0px;height:20px;line-height:20px;font:normal 17px 'Liberation Sans', sans-serif;color:#000;white-space:pre;">Device name</div>
<div style="left:2534px;top:1497px;width:284px;height:21px;background:#ececec;"></div><div style="left:2560.5px;top:1498px;width:71.5px;height:20px;background:#cdcdcd;"></div><div style="left:2591.25px;top:1502.5px;width:2.0px;height:10.0px;background:#333;"></div><div style="left:2595.25px;top:1502.5px;width:2.0px;height:10.0px;background:#333;"></div><div style="left:2599.25px;top:1502.5px;width:2.0px;height:10.0px;background:#333;"></div><svg style="left:2540px;top:1500.5px;" width="10" height="14" viewBox="0 0 10 14"><path d="M8 1L2 7l6 6" fill="none" stroke="#111" stroke-width="2.6"/></svg><svg style="left:2801px;top:1500.5px;" width="10" height="14" viewBox="0 0 10 14"><path d="M2 1l6 6-6 6" fill="none" stroke="#111" stroke-width="2.6"/></svg>
<div style="left:60px;top:1262px;width:1115px;height:31px;background:#f3f3f3;border:2px solid #c2c2c2;"></div><div style="left:62px;top:1263px;width:1112px;height:28px;background:#1f1f1f;"></div><div class="t" style="left:66px;top:1267.5px;height:20px;line-height:20px;font:normal 17px 'Liberation Sans', sans-serif;color:#ffffff;white-space:pre;">Output</div><svg style="left:1131px;top:1270.0px;" width="12" height="15" viewBox="0 0 12 15"><rect x="3" y="0.8" width="6" height="7.5" fill="none" stroke="#fff" stroke-width="1.6"/><rect x="6" y="0" width="3" height="8" fill="#fff"/><path d="M0 9h12M6 9v6" stroke="#fff" stroke-width="2"/></svg><svg style="left:1155px;top:1271.0px;" width="11" height="11" viewBox="0 0 11 11"><path d="M1 1L10 10M10 1L1 10" stroke="#fff" stroke-width="2.2"/></svg>
<div style="left:62px;top:1295px;width:1112px;height:193px;background:#f0f0f0;border:1px solid #b4b4b4;"></div>
<div style="left:63px;top:1296px;width:1086px;height:167px;background:#ffffff;"></div>
<div style="left:63px;top:1296px;width:1086px;height:167px;overflow:hidden;">
<div style="left:3.3px;top:4.5px;height:24px;line-height:24px;font:19.1px 'Liberation Mono', monospace;letter-spacing:0.085px;color:#111;white-space:pre;-webkit-text-stroke:0.2px #111;">Ethernet      1.0.0   C:\Users\mcmch\AppData\Local\T\A\internal\arduino_mbed_opta_3.5.4_ccd846</div>
<div style="left:3.3px;top:27.3px;height:24px;line-height:24px;font:19.1px 'Liberation Mono', monospace;letter-spacing:0.085px;color:#111;white-space:pre;-webkit-text-stroke:0.2px #111;">SocketWrapper 1.0     C:\Users\mcmch\AppData\Local\T\A\internal\arduino_mbed_opta_3.5.4_ccd846</div>
<div style="left:3.3px;top:50.1px;height:24px;line-height:24px;font:19.1px 'Liberation Mono', monospace;letter-spacing:0.085px;color:#111;white-space:pre;-webkit-text-stroke:0.2px #111;"></div>
<div style="left:3.3px;top:72.9px;height:24px;line-height:24px;font:19.1px 'Liberation Mono', monospace;letter-spacing:0.085px;color:#111;white-space:pre;-webkit-text-stroke:0.2px #111;">Used platform     Version Path</div>
<div style="left:3.3px;top:95.7px;height:24px;line-height:24px;font:19.1px 'Liberation Mono', monospace;letter-spacing:0.085px;color:#111;white-space:pre;-webkit-text-stroke:0.2px #111;">arduino:mbed_opta 3.5.4   C:\Users\mcmch\AppData\Local\T\A\internal\arduino_mbed_opta_3.5.4_cc</div>
<div style="left:3.3px;top:118.5px;height:24px;line-height:24px;font:19.1px 'Liberation Mono', monospace;letter-spacing:0.085px;color:#111;white-space:pre;-webkit-text-stroke:0.2px #111;">D:\MEGA\CODIGOS\PLCIDE\Opta_Modbus_Thermocouple\LLSketch\LLSketch.ino: sketch file compiled</div>
<div style="left:3.3px;top:141.3px;height:24px;line-height:24px;font:19.1px 'Liberation Mono', monospace;letter-spacing:0.085px;color:#111;white-space:pre;-webkit-text-stroke:0.2px #111;">--- End   compilation  (PostBuild)  4:13:23 PM ---</div>
</div>
<div style="left:1149px;top:1296px;width:24px;height:167px;background:#f0f0f0;"></div>
<div style="left:1150px;top:1416px;width:22px;height:20px;background:#cdcdcd;"></div>
<div style="left:1155px;top:1421.5px;width:12px;height:2.0px;background:#444;"></div><div style="left:1155px;top:1425px;width:12px;height:2px;background:#444;"></div><div style="left:1155px;top:1428.5px;width:12px;height:2.0px;background:#444;"></div>
<svg style="left:1154px;top:1304px;" width="14" height="10" viewBox="0 0 14 10"><path d="M1 9l6-7 6 7" fill="none" stroke="#111" stroke-width="2.6"/></svg>
<svg style="left:1154px;top:1442px;" width="14" height="10" viewBox="0 0 14 10"><path d="M1 1l6 7 6-7" fill="none" stroke="#111" stroke-width="2.6"/></svg>
<div style="left:63px;top:1463px;width:1086px;height:23px;background:#ececec;"></div><div style="left:90.5px;top:1464px;width:35.5px;height:22px;background:#cdcdcd;"></div><div style="left:103.25px;top:1469.5px;width:2.0px;height:10.0px;background:#333;"></div><div style="left:107.25px;top:1469.5px;width:2.0px;height:10.0px;background:#333;"></div><div style="left:111.25px;top:1469.5px;width:2.0px;height:10.0px;background:#333;"></div><svg style="left:69px;top:1467.5px;" width="10" height="14" viewBox="0 0 10 14"><path d="M8 1L2 7l6 6" fill="none" stroke="#111" stroke-width="2.6"/></svg><svg style="left:1132px;top:1467.5px;" width="10" height="14" viewBox="0 0 10 14"><path d="M2 1l6 6-6 6" fill="none" stroke="#111" stroke-width="2.6"/></svg>
<div style="left:64px;top:1491px;width:53px;height:25px;background:#dde3e5;"></div>
<div class="t" style="left:72px;top:1493.5px;height:20px;line-height:20px;font:normal 17px 'Liberation Sans', sans-serif;color:#000;white-space:pre;">Build</div>
<div style="left:120.5px;top:1491px;width:123.0px;height:25px;background:#dde3e5;"></div>
<div class="t" style="left:128.5px;top:1493.5px;height:20px;line-height:20px;font:normal 17px 'Liberation Sans', sans-serif;color:#000;white-space:pre;">Find in project</div>
<div style="left:247px;top:1491px;width:64px;height:25px;background:#dde3e5;"></div>
<div class="t" style="left:255px;top:1493.5px;height:20px;line-height:20px;font:normal 17px 'Liberation Sans', sans-serif;color:#000;white-space:pre;">Debug</div>
<div style="left:315px;top:1491px;width:90px;height:25px;background:#ffffff;"></div>
<div class="t" style="left:323px;top:1493.5px;height:20px;line-height:20px;font:normal 17px 'Liberation Sans', sans-serif;color:#1b8a93;white-space:pre;">Resources</div>
<div style="left:1183px;top:1262px;width:1342px;height:31px;background:#f3f3f3;border:2px solid #c2c2c2;"></div><div style="left:1185px;top:1263px;width:1339px;height:28px;background:#1f1f1f;"></div><div class="t" style="left:1189px;top:1267.5px;height:20px;line-height:20px;font:normal 17px 'Liberation Sans', sans-serif;color:#ffffff;white-space:pre;">Symbols browser</div><svg style="left:2481px;top:1270.0px;" width="12" height="15" viewBox="0 0 12 15"><rect x="3" y="0.8" width="6" height="7.5" fill="none" stroke="#fff" stroke-width="1.6"/><rect x="6" y="0" width="3" height="8" fill="#fff"/><path d="M0 9h12M6 9v6" stroke="#fff" stroke-width="2"/></svg><svg style="left:2505px;top:1271.0px;" width="11" height="11" viewBox="0 0 11 11"><path d="M1 1L10 10M10 1L1 10" stroke="#fff" stroke-width="2.2"/></svg>
<div class="t" style="left:1191px;top:1302.5px;height:20px;line-height:20px;font:normal 17px 'Liberation Sans', sans-serif;color:#000;white-space:pre;">Symbol name:</div>
<div style="left:1307px;top:1298px;width:286px;height:31px;background:#fcfcfc;"></div>
<div class="t" style="left:1312px;top:1303.0px;height:20px;line-height:20px;font:normal 17px 'Liberation Sans', sans-serif;color:#a8a8a8;white-space:pre;">type here to find symbols</div>
<div class="t" style="left:1603px;top:1303.5px;height:20px;line-height:20px;font:normal 17px 'Liberation Sans', sans-serif;color:#000;white-space:pre;">Filters</div>
<svg style="left:1653px;top:1310px;" width="8" height="5" viewBox="0 0 8 5"><path d="M0 0h8L4 5z" fill="#333"/></svg>
<div style="left:1667.5px;top:1297px;width:1.5px;height:33px;background:#cfcfcf;"></div>
<div class="t" style="left:1678px;top:1302.5px;height:20px;line-height:20px;font:normal 17px 'Liberation Sans', sans-serif;color:#000;white-space:pre;">Active filters: All</div>
<div style="left:1183px;top:1331px;width:1343px;height:190px;background:#ffffff;border:1px solid #b4b4b4;"></div>
<div class="t" style="left:1193px;top:1339.7px;height:20px;line-height:20px;font:normal 17px 'Liberation Sans', sans-serif;color:#000;white-space:pre;">Name</div>
<div class="t" style="left:1624px;top:1339.7px;height:20px;line-height:20px;font:normal 17px 'Liberation Sans', sans-serif;color:#000;white-space:pre;">Type</div>
<div class="t" style="left:1797px;top:1339.7px;height:20px;line-height:20px;font:normal 17px 'Liberation Sans', sans-serif;color:#000;white-space:pre;">Location</div>
<div style="left:1614px;top:1332px;width:1px;height:34px;background:#e6e6e6;"></div>
<div style="left:1787px;top:1332px;width:1px;height:34px;background:#e6e6e6;"></div>
<div style="left:1959.5px;top:1332px;width:1.0px;height:34px;background:#e6e6e6;"></div>
<div class="t" style="left:65px;top:1526.5px;height:20px;line-height:20px;font:normal 17px 'Liberation Sans', sans-serif;color:#000;white-space:pre;">Ready</div>
<div style="left:2202px;top:1524px;width:203.5px;height:25.5px;text-align:center;background:#f0f0f0;border:1px solid #a8a8a8;font:bold 18px 'Liberation Sans', sans-serif;line-height:29px;color:#000;">EDIT MODE</div>
<div style="left:2409px;top:1524px;width:203.5px;height:25.5px;text-align:center;background:#7ba6fb;font:bold 18px 'Liberation Sans', sans-serif;line-height:29px;color:#000;">NO CODE</div>
<div style="left:2616px;top:1524px;width:203px;height:25.5px;text-align:center;background:#058a0b;font:bold 18px 'Liberation Sans', sans-serif;line-height:29px;color:#fff;">CONNECTED</div>
</body></html>
